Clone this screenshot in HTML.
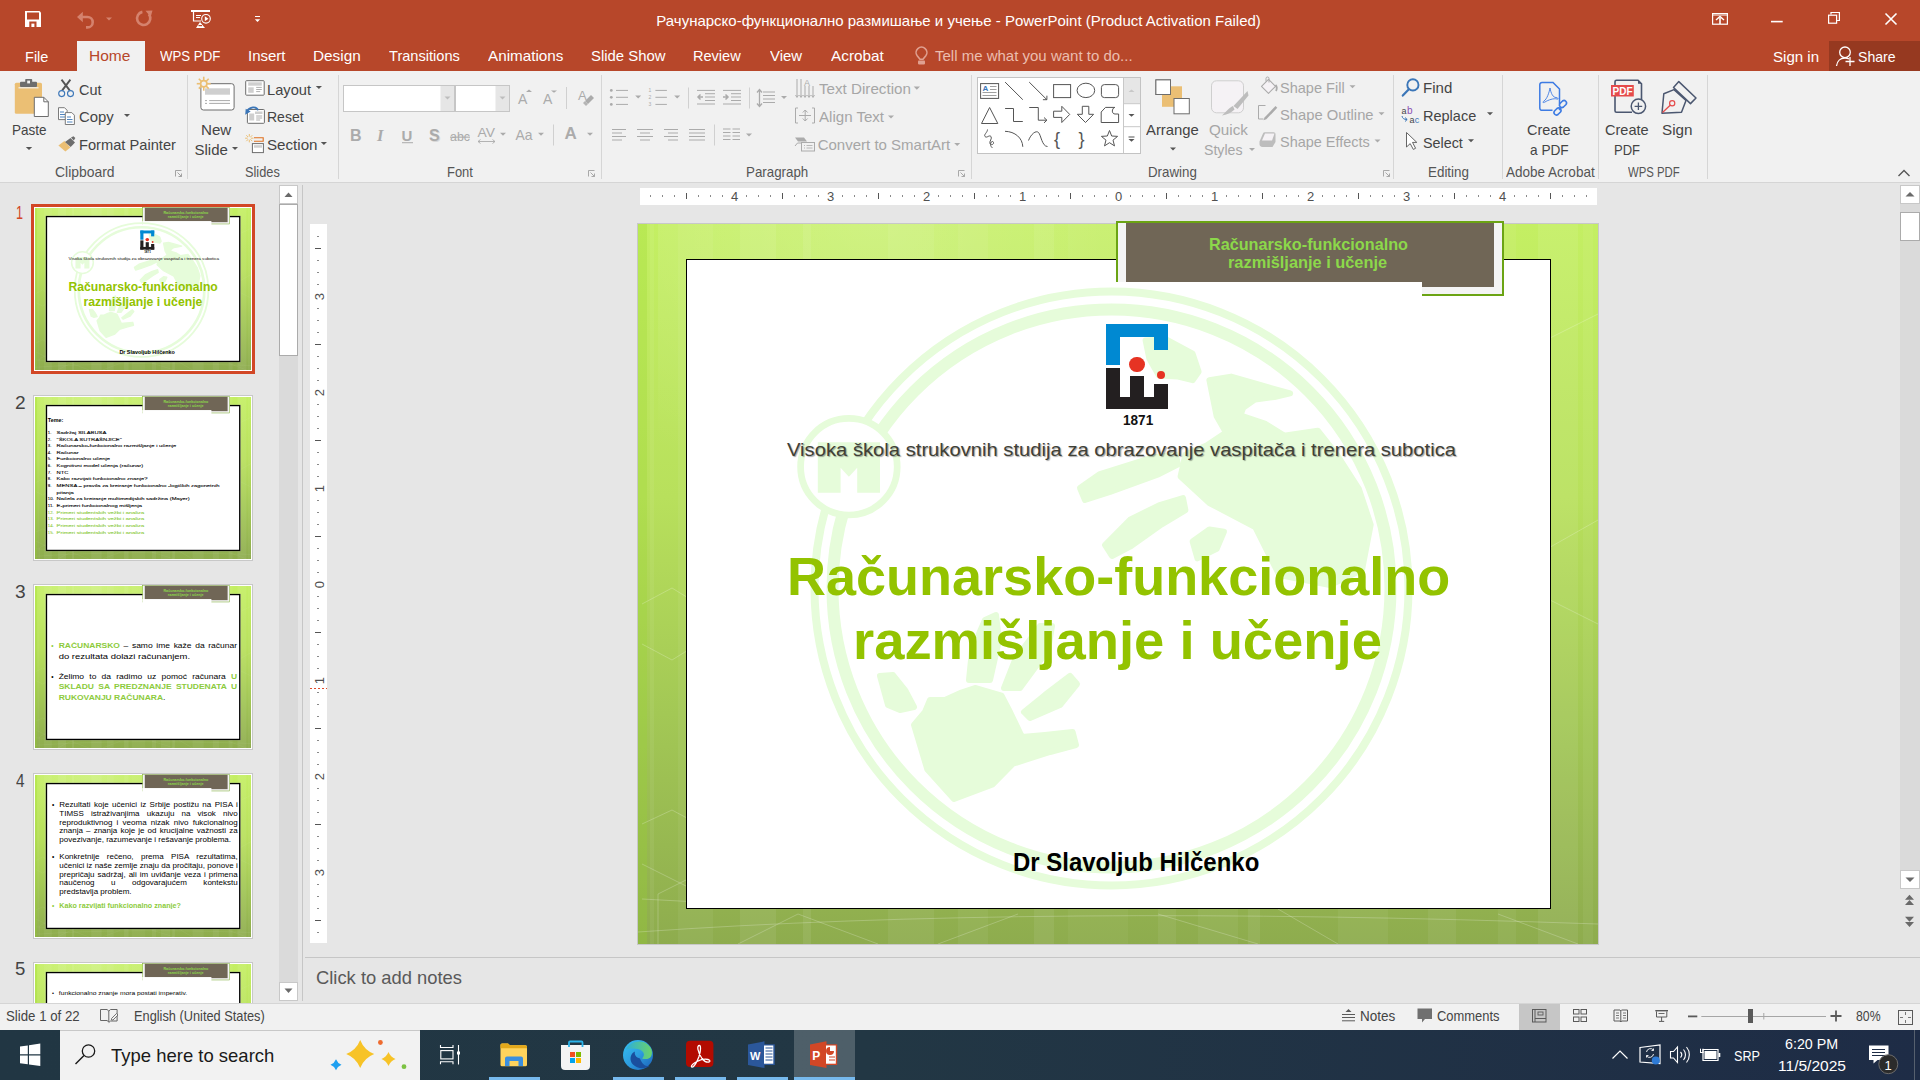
<!DOCTYPE html><html><head><meta charset="utf-8"><style>
*{margin:0;padding:0}
html,body{width:1920px;height:1080px;overflow:hidden;background:#E6E6E6;font-family:"Liberation Sans", sans-serif}
.t{position:absolute;white-space:pre;transform-origin:0 0;font-family:"Liberation Sans", sans-serif}
.slide{position:absolute;width:960px;height:720px;overflow:visible}
.sbg{position:absolute;left:0;top:0;width:960px;height:720px;background:linear-gradient(180deg,#C4EF63 0%,#B8E05C 38%,#A3C855 68%,#8EAC4E 100%)}
.sinner{position:absolute;left:48px;top:35px;width:865px;height:650px;box-sizing:border-box;border:1px solid #000;background:#fff;overflow:hidden}
</style></head><body><div style="position:absolute;left:0px;top:0px;width:1920px;height:71px;background:#B7472A;"></div><div style="position:absolute;left:77px;top:41px;width:68px;height:30px;background:#F1F1F1;"></div><div style="position:absolute;left:1829px;top:41px;width:91px;height:30px;background:#963920;"></div><div style="position:absolute;left:0px;top:71px;width:1920px;height:111px;background:#F1F1F1;"></div><div style="position:absolute;left:0px;top:182px;width:1920px;height:1px;background:#D5D5D5;"></div><div style="position:absolute;left:187px;top:75px;width:1px;height:104px;background:#D6D6D6;"></div><div style="position:absolute;left:338px;top:75px;width:1px;height:104px;background:#D6D6D6;"></div><div style="position:absolute;left:601px;top:75px;width:1px;height:104px;background:#D6D6D6;"></div><div style="position:absolute;left:971px;top:75px;width:1px;height:104px;background:#D6D6D6;"></div><div style="position:absolute;left:1393px;top:75px;width:1px;height:104px;background:#D6D6D6;"></div><div style="position:absolute;left:1502px;top:75px;width:1px;height:104px;background:#D6D6D6;"></div><div style="position:absolute;left:1598px;top:75px;width:1px;height:104px;background:#D6D6D6;"></div><div style="position:absolute;left:1707px;top:75px;width:1px;height:104px;background:#D6D6D6;"></div><div style="position:absolute;left:0;top:183px;width:278px;height:820px;overflow:hidden"><div style="position:absolute;left:31px;top:21px;width:224px;height:170px;background:#D24726;"></div><div style="position:absolute;left:34px;top:24px;width:218px;height:164px;background:#FFFFFF;"></div><div style="position:absolute;left:35px;top:25px;transform:scale(0.225);transform-origin:0 0"><div class="slide">
<div class="sbg"></div>
<div style="position:absolute;left:12px;top:0;width:4px;height:720px;background:rgba(255,255,255,0.06)"></div><div style="position:absolute;left:40px;top:0;width:35px;height:720px;background:rgba(255,255,255,0.05)"></div><div style="position:absolute;left:102px;top:0;width:36px;height:720px;background:rgba(255,255,255,0.07)"></div><div style="position:absolute;left:165px;top:0;width:8px;height:720px;background:rgba(255,255,255,0.08)"></div><div style="position:absolute;left:250px;top:0;width:46px;height:720px;background:rgba(255,255,255,0.06)"></div><div style="position:absolute;left:320px;top:0;width:30px;height:720px;background:rgba(255,255,255,0.05)"></div><div style="position:absolute;left:396px;top:0;width:20px;height:720px;background:rgba(255,255,255,0.07)"></div><div style="position:absolute;left:430px;top:0;width:60px;height:720px;background:rgba(255,255,255,0.04)"></div><div style="position:absolute;left:520px;top:0;width:18px;height:720px;background:rgba(255,255,255,0.06)"></div><div style="position:absolute;left:560px;top:0;width:40px;height:720px;background:rgba(255,255,255,0.05)"></div><div style="position:absolute;left:610px;top:0;width:12px;height:720px;background:rgba(255,255,255,0.07)"></div><div style="position:absolute;left:700px;top:0;width:50px;height:720px;background:rgba(255,255,255,0.05)"></div><div style="position:absolute;left:790px;top:0;width:28px;height:720px;background:rgba(255,255,255,0.06)"></div><div style="position:absolute;left:860px;top:0;width:18px;height:720px;background:rgba(255,255,255,0.05)"></div><div style="position:absolute;left:900px;top:0;width:40px;height:720px;background:rgba(255,255,255,0.07)"></div><div style="position:absolute;left:945px;top:0;width:10px;height:720px;background:rgba(255,255,255,0.05)"></div><div style="position:absolute;left:0;top:0;width:9px;height:720px;background:rgba(150,215,40,0.25)"></div><div style="position:absolute;left:20px;top:0;width:640px;height:300px;background:radial-gradient(ellipse 360px 280px at 220px 0px, rgba(255,255,255,0.2), rgba(255,255,255,0) 100%)"></div><svg width="960" height="720" style="position:absolute;left:0;top:0"><g fill="none" stroke="rgba(255,255,255,0.22)" stroke-width="1">
<path d="M4,380 L34,364 L60,380 L60,420 L34,436 L4,420"/><path d="M4,600 L34,586 L60,600"/><path d="M4,640 L60,668"/><path d="M4,675 L60,678"/>
<path d="M20,720 L20,670 L60,650"/><path d="M100,720 L160,690 L240,720"/><path d="M300,720 L380,690"/><path d="M520,690 L620,720"/>
<path d="M0,708 Q400,680 960,700"/><path d="M640,685 L700,720"/><path d="M860,690 L940,720"/><path d="M900,120 L960,90"/><path d="M900,330 L960,296 M900,370 L960,400"/>
</g></svg>
<div class="sinner" style="border-width:6px"></div>
<div style="position:absolute;left:478px;top:-3px;width:388px;height:75px;box-sizing:border-box;border:2px solid #6BA414;background:#F4F4F4"></div><div style="position:absolute;left:488px;top:-1px;width:368px;height:64px;background:#706656"></div><div style="position:absolute;left:477px;top:58px;width:307px;height:18px;background:#FFFFFF"></div>
<div style="position:absolute;left:49px;top:36px;width:863px;height:648px;overflow:hidden"><div style="position:absolute;left:-49px;top:-36px;width:960px;height:720px"><svg width="960" height="720" style="position:absolute;left:0;top:0" viewBox="0 0 960 720">
<g fill="#E6FCDA" stroke="#E6FCDA" stroke-width="6" stroke-linejoin="round"><path d="M276.0,501.0 L287.0,488.0 L292.0,476.0 L307.0,476.0 L323.5,468.6 L337.0,464.0 L363.5,471.6 L372.0,488.0 L384.0,513.0 L407.0,511.0 L434.6,508.0 L438.0,521.0 L412.0,528.0 L375.0,539.7 L354.6,560.4 L316.0,575.0 L289.4,545.6 Z"/><path d="M242.0,452.0 L255.0,451.0 L267.0,466.0 L276.0,483.0 L262.0,486.0 L250.0,481.0 Z"/><path d="M331.0,456.0 L334.0,426.0 L347.0,396.0 L358.0,391.0 L361.0,416.0 L352.0,456.0 Z"/><path d="M366.0,464.0 L377.0,436.0 L402.0,402.0 L414.0,402.0 L410.0,426.0 L382.0,464.0 Z"/><path d="M386.0,488.0 L407.0,471.0 L432.0,452.0 L439.0,460.0 L422.0,481.0 L392.0,494.0 Z"/><path d="M507.6,116.5 L528.1,115.3 L554.6,129.7 L560.6,147.8 L554.6,156.2 L540.1,152.6 L520.9,151.4 L511.3,134.5 Z"/><path d="M571.4,156.2 L593.1,152.6 L622.0,161.0 L652.1,169.4 L636.4,173.0 L617.2,175.4 L605.1,183.9 L600.3,197.1 L588.3,209.1 L578.7,192.3 L573.8,168.2 Z"/><path d="M590.7,206.7 L605.1,192.3 L626.8,199.5 L646.1,211.6 L679.8,206.7 L699.0,230.8 L720.7,264.5 L732.7,300.6 L724.0,346.0 L692.0,361.0 L641.3,351.0 L617.2,303.0 L571.4,279.0 L542.6,252.5 L547.4,230.8 L569.0,221.2 Z"/><path d="M442.0,264.0 L462.0,250.0 L516.1,233.2 L537.7,230.8 L540.1,240.4 L520.9,250.1 L472.0,268.0 L447.0,276.0 Z"/><path d="M467.0,321.0 L492.0,295.8 L520.9,281.4 L545.0,274.1 L547.4,286.2 L523.3,300.6 L492.0,322.7 L474.0,332.0 Z"/><path d="M554.6,317.5 L571.4,305.4 L585.9,307.8 L578.7,324.7 L559.4,334.3 Z"/></g>
<g fill="none" stroke="#E6FCDA">
<circle cx="473.5" cy="364.5" r="297" stroke-width="8"/>
<circle cx="473.5" cy="364.5" r="279" stroke-width="12"/>
</g>
<circle cx="210.89999999999998" cy="242.7" r="48.3" fill="#FFFFFF" stroke="#E6FCDA" stroke-width="6.7"/>
<path fill="#E6FCDA" d="M179.79999999999995,218.2 H242 V268.8 H219.20000000000005 V243.8 L210.89999999999998,252.7 L202.60000000000002,243.8 V268.8 H179.79999999999995 Z"/>
</svg></div></div>
<div style="position:absolute;left:468px;top:100px;width:62px;height:13px;background:#0089D2"></div><div style="position:absolute;left:468px;top:100px;width:14px;height:41px;background:#0089D2"></div><div style="position:absolute;left:516px;top:100px;width:14px;height:26px;background:#0089D2"></div><div style="position:absolute;left:468px;top:144px;width:14px;height:41px;background:#231F20"></div><div style="position:absolute;left:468px;top:173px;width:62px;height:12px;background:#231F20"></div><div style="position:absolute;left:492px;top:152px;width:14px;height:33px;background:#231F20"></div><div style="position:absolute;left:516px;top:160px;width:14px;height:25px;background:#231F20"></div><div style="position:absolute;left:491.29999999999995px;top:132.5px;width:15.4px;height:15.4px;border-radius:50%;background:#E63323"></div><div style="position:absolute;left:519px;top:147.3px;width:8px;height:8px;border-radius:50%;background:#E63323"></div>
<div class="t" style="left:570.75px;top:12.00px;font-size:17px;line-height:17px;font-weight:700;color:#8CD84A;transform:scaleX(0.9531);">Računarsko-funkcionalno</div>
<div class="t" style="left:590.04px;top:30.40px;font-size:17px;line-height:17px;font-weight:700;color:#8CD84A;transform:scaleX(0.9622);">razmišljanje i učenje</div>
<div class="t" style="left:149.00px;top:215.80px;font-size:19px;line-height:19px;font-weight:400;color:#404036;transform:scaleX(1.0634);text-shadow:1px 1px 1px rgba(0,0,0,0.35);">Visoka škola strukovnih studija za obrazovanje vaspitača i trenera subotica</div>
<div class="t" style="left:148.64px;top:325.80px;font-size:53px;line-height:53px;font-weight:700;color:#93C300;transform:scaleX(1.0190);">Računarsko-funkcionalno</div>
<div class="t" style="left:214.62px;top:389.60px;font-size:53px;line-height:53px;font-weight:700;color:#93C300;transform:scaleX(1.0260);">razmišljanje i učenje</div>
<div class="t" style="left:375.08px;top:625.50px;font-size:25px;line-height:25px;font-weight:700;color:#000000;transform:scaleX(0.9583);">Dr Slavoljub Hilčenko</div>
<div class="t" style="left:485.09px;top:188.00px;font-size:15px;line-height:15px;font-weight:700;color:#111111;transform:scaleX(0.9062);">1871</div>

</div></div><div style="position:absolute;left:33px;top:212px;width:220px;height:166px;background:#C8C8C8;"></div><div style="position:absolute;left:34px;top:213px;width:218px;height:164px;background:#FFFFFF;"></div><div style="position:absolute;left:35px;top:214px;transform:scale(0.225);transform-origin:0 0"><div class="slide">
<div class="sbg"></div>
<div style="position:absolute;left:12px;top:0;width:4px;height:720px;background:rgba(255,255,255,0.06)"></div><div style="position:absolute;left:40px;top:0;width:35px;height:720px;background:rgba(255,255,255,0.05)"></div><div style="position:absolute;left:102px;top:0;width:36px;height:720px;background:rgba(255,255,255,0.07)"></div><div style="position:absolute;left:165px;top:0;width:8px;height:720px;background:rgba(255,255,255,0.08)"></div><div style="position:absolute;left:250px;top:0;width:46px;height:720px;background:rgba(255,255,255,0.06)"></div><div style="position:absolute;left:320px;top:0;width:30px;height:720px;background:rgba(255,255,255,0.05)"></div><div style="position:absolute;left:396px;top:0;width:20px;height:720px;background:rgba(255,255,255,0.07)"></div><div style="position:absolute;left:430px;top:0;width:60px;height:720px;background:rgba(255,255,255,0.04)"></div><div style="position:absolute;left:520px;top:0;width:18px;height:720px;background:rgba(255,255,255,0.06)"></div><div style="position:absolute;left:560px;top:0;width:40px;height:720px;background:rgba(255,255,255,0.05)"></div><div style="position:absolute;left:610px;top:0;width:12px;height:720px;background:rgba(255,255,255,0.07)"></div><div style="position:absolute;left:700px;top:0;width:50px;height:720px;background:rgba(255,255,255,0.05)"></div><div style="position:absolute;left:790px;top:0;width:28px;height:720px;background:rgba(255,255,255,0.06)"></div><div style="position:absolute;left:860px;top:0;width:18px;height:720px;background:rgba(255,255,255,0.05)"></div><div style="position:absolute;left:900px;top:0;width:40px;height:720px;background:rgba(255,255,255,0.07)"></div><div style="position:absolute;left:945px;top:0;width:10px;height:720px;background:rgba(255,255,255,0.05)"></div><div style="position:absolute;left:0;top:0;width:9px;height:720px;background:rgba(150,215,40,0.25)"></div><div style="position:absolute;left:20px;top:0;width:640px;height:300px;background:radial-gradient(ellipse 360px 280px at 220px 0px, rgba(255,255,255,0.2), rgba(255,255,255,0) 100%)"></div><svg width="960" height="720" style="position:absolute;left:0;top:0"><g fill="none" stroke="rgba(255,255,255,0.22)" stroke-width="1">
<path d="M4,380 L34,364 L60,380 L60,420 L34,436 L4,420"/><path d="M4,600 L34,586 L60,600"/><path d="M4,640 L60,668"/><path d="M4,675 L60,678"/>
<path d="M20,720 L20,670 L60,650"/><path d="M100,720 L160,690 L240,720"/><path d="M300,720 L380,690"/><path d="M520,690 L620,720"/>
<path d="M0,708 Q400,680 960,700"/><path d="M640,685 L700,720"/><path d="M860,690 L940,720"/><path d="M900,120 L960,90"/><path d="M900,330 L960,296 M900,370 L960,400"/>
</g></svg>
<div class="sinner" style="border-width:6px"></div>
<div style="position:absolute;left:478px;top:-3px;width:388px;height:75px;box-sizing:border-box;border:2px solid #6BA414;background:#F4F4F4"></div><div style="position:absolute;left:488px;top:-1px;width:368px;height:64px;background:#706656"></div><div style="position:absolute;left:477px;top:58px;width:307px;height:18px;background:#FFFFFF"></div>


<div class="t" style="left:570.75px;top:12.00px;font-size:17px;line-height:17px;font-weight:700;color:#8CD84A;transform:scaleX(0.9531);">Računarsko-funkcionalno</div><div class="t" style="left:590.04px;top:30.40px;font-size:17px;line-height:17px;font-weight:700;color:#8CD84A;transform:scaleX(0.9622);">razmišljanje i učenje</div>
<div class="t" style="left:57px;top:93.6px;font-size:20px;line-height:20px;color:#000;font-weight:700;transform:scaleX(1.2);">Teme:</div><div class="t" style="left:57px;top:148.2px;font-size:19px;line-height:19px;color:#000;font-weight:400;-webkit-text-stroke:0.4px #000;">1.</div><div class="t" style="left:96px;top:148.2px;font-size:19px;line-height:19px;color:#000;font-weight:400;transform:scaleX(1.36);-webkit-text-stroke:0.4px #000;">Sadržaj SILABUSA</div><div class="t" style="left:57px;top:177.7px;font-size:19px;line-height:19px;color:#000;font-weight:400;-webkit-text-stroke:0.4px #000;">2.</div><div class="t" style="left:96px;top:177.7px;font-size:19px;line-height:19px;color:#000;font-weight:400;transform:scaleX(1.36);-webkit-text-stroke:0.4px #000;">"ŠKOLA SUTRAŠNJICE"</div><div class="t" style="left:57px;top:207.2px;font-size:19px;line-height:19px;color:#000;font-weight:400;-webkit-text-stroke:0.4px #000;">3.</div><div class="t" style="left:96px;top:207.2px;font-size:19px;line-height:19px;color:#000;font-weight:400;transform:scaleX(1.36);-webkit-text-stroke:0.4px #000;">Računarsko-funkcionalno razmišljanje i učenje</div><div class="t" style="left:57px;top:236.7px;font-size:19px;line-height:19px;color:#000;font-weight:400;-webkit-text-stroke:0.4px #000;">4.</div><div class="t" style="left:96px;top:236.7px;font-size:19px;line-height:19px;color:#000;font-weight:400;transform:scaleX(1.36);-webkit-text-stroke:0.4px #000;">Računar</div><div class="t" style="left:57px;top:266.2px;font-size:19px;line-height:19px;color:#000;font-weight:400;-webkit-text-stroke:0.4px #000;">5.</div><div class="t" style="left:96px;top:266.2px;font-size:19px;line-height:19px;color:#000;font-weight:400;transform:scaleX(1.36);-webkit-text-stroke:0.4px #000;">Funkcionalno učenje</div><div class="t" style="left:57px;top:295.7px;font-size:19px;line-height:19px;color:#000;font-weight:400;-webkit-text-stroke:0.4px #000;">6.</div><div class="t" style="left:96px;top:295.7px;font-size:19px;line-height:19px;color:#000;font-weight:400;transform:scaleX(1.36);-webkit-text-stroke:0.4px #000;">Kognitivni model učenja (računar)</div><div class="t" style="left:57px;top:325.2px;font-size:19px;line-height:19px;color:#000;font-weight:400;-webkit-text-stroke:0.4px #000;">7.</div><div class="t" style="left:96px;top:325.2px;font-size:19px;line-height:19px;color:#000;font-weight:400;transform:scaleX(1.36);-webkit-text-stroke:0.4px #000;">NTC</div><div class="t" style="left:57px;top:354.7px;font-size:19px;line-height:19px;color:#000;font-weight:400;-webkit-text-stroke:0.4px #000;">8.</div><div class="t" style="left:96px;top:354.7px;font-size:19px;line-height:19px;color:#000;font-weight:400;transform:scaleX(1.36);-webkit-text-stroke:0.4px #000;">Kako razvijati funkcionalno znanje?</div><div class="t" style="left:57px;top:384.2px;font-size:19px;line-height:19px;color:#000;font-weight:400;-webkit-text-stroke:0.4px #000;">9.</div><div class="t" style="left:96px;top:384.2px;font-size:19px;line-height:19px;color:#000;font-weight:400;transform:scaleX(1.36);-webkit-text-stroke:0.4px #000;">MENSA – pravila za kreiranje funkcionalno -logičkih zagonetnih</div><div class="t" style="left:96px;top:413.7px;font-size:19px;line-height:19px;color:#000;font-weight:400;transform:scaleX(1.36);-webkit-text-stroke:0.4px #000;">pitanja</div><div class="t" style="left:57px;top:443.2px;font-size:19px;line-height:19px;color:#000;font-weight:400;-webkit-text-stroke:0.4px #000;">10.</div><div class="t" style="left:96px;top:443.2px;font-size:19px;line-height:19px;color:#000;font-weight:400;transform:scaleX(1.36);-webkit-text-stroke:0.4px #000;">Načela za kreiranje multimedijskih sadržina (Mayer)</div><div class="t" style="left:57px;top:472.7px;font-size:19px;line-height:19px;color:#000;font-weight:400;-webkit-text-stroke:0.4px #000;">11.</div><div class="t" style="left:96px;top:472.7px;font-size:19px;line-height:19px;color:#000;font-weight:400;transform:scaleX(1.36);-webkit-text-stroke:0.4px #000;">E-primeri funkcionalnog mišljenja</div><div class="t" style="left:57px;top:502.2px;font-size:19px;line-height:19px;color:#8CCB3C;font-weight:400;-webkit-text-stroke:0.4px #8CCB3C;">12.</div><div class="t" style="left:96px;top:502.2px;font-size:19px;line-height:19px;color:#8CCB3C;font-weight:400;transform:scaleX(1.36);-webkit-text-stroke:0.4px #8CCB3C;">Primeri studentskih vežbi i analiza</div><div class="t" style="left:57px;top:531.7px;font-size:19px;line-height:19px;color:#8CCB3C;font-weight:400;-webkit-text-stroke:0.4px #8CCB3C;">13.</div><div class="t" style="left:96px;top:531.7px;font-size:19px;line-height:19px;color:#8CCB3C;font-weight:400;transform:scaleX(1.36);-webkit-text-stroke:0.4px #8CCB3C;">Primeri studentskih vežbi i analiza</div><div class="t" style="left:57px;top:561.2px;font-size:19px;line-height:19px;color:#8CCB3C;font-weight:400;-webkit-text-stroke:0.4px #8CCB3C;">14.</div><div class="t" style="left:96px;top:561.2px;font-size:19px;line-height:19px;color:#8CCB3C;font-weight:400;transform:scaleX(1.36);-webkit-text-stroke:0.4px #8CCB3C;">Primeri studentskih vežbi i analiza</div><div class="t" style="left:57px;top:590.7px;font-size:19px;line-height:19px;color:#8CCB3C;font-weight:400;-webkit-text-stroke:0.4px #8CCB3C;">15.</div><div class="t" style="left:96px;top:590.7px;font-size:19px;line-height:19px;color:#8CCB3C;font-weight:400;transform:scaleX(1.36);-webkit-text-stroke:0.4px #8CCB3C;">Primeri studentskih vežbi i analiza</div>
</div></div><div style="position:absolute;left:33px;top:401px;width:220px;height:166px;background:#C8C8C8;"></div><div style="position:absolute;left:34px;top:402px;width:218px;height:164px;background:#FFFFFF;"></div><div style="position:absolute;left:35px;top:403px;transform:scale(0.225);transform-origin:0 0"><div class="slide">
<div class="sbg"></div>
<div style="position:absolute;left:12px;top:0;width:4px;height:720px;background:rgba(255,255,255,0.06)"></div><div style="position:absolute;left:40px;top:0;width:35px;height:720px;background:rgba(255,255,255,0.05)"></div><div style="position:absolute;left:102px;top:0;width:36px;height:720px;background:rgba(255,255,255,0.07)"></div><div style="position:absolute;left:165px;top:0;width:8px;height:720px;background:rgba(255,255,255,0.08)"></div><div style="position:absolute;left:250px;top:0;width:46px;height:720px;background:rgba(255,255,255,0.06)"></div><div style="position:absolute;left:320px;top:0;width:30px;height:720px;background:rgba(255,255,255,0.05)"></div><div style="position:absolute;left:396px;top:0;width:20px;height:720px;background:rgba(255,255,255,0.07)"></div><div style="position:absolute;left:430px;top:0;width:60px;height:720px;background:rgba(255,255,255,0.04)"></div><div style="position:absolute;left:520px;top:0;width:18px;height:720px;background:rgba(255,255,255,0.06)"></div><div style="position:absolute;left:560px;top:0;width:40px;height:720px;background:rgba(255,255,255,0.05)"></div><div style="position:absolute;left:610px;top:0;width:12px;height:720px;background:rgba(255,255,255,0.07)"></div><div style="position:absolute;left:700px;top:0;width:50px;height:720px;background:rgba(255,255,255,0.05)"></div><div style="position:absolute;left:790px;top:0;width:28px;height:720px;background:rgba(255,255,255,0.06)"></div><div style="position:absolute;left:860px;top:0;width:18px;height:720px;background:rgba(255,255,255,0.05)"></div><div style="position:absolute;left:900px;top:0;width:40px;height:720px;background:rgba(255,255,255,0.07)"></div><div style="position:absolute;left:945px;top:0;width:10px;height:720px;background:rgba(255,255,255,0.05)"></div><div style="position:absolute;left:0;top:0;width:9px;height:720px;background:rgba(150,215,40,0.25)"></div><div style="position:absolute;left:20px;top:0;width:640px;height:300px;background:radial-gradient(ellipse 360px 280px at 220px 0px, rgba(255,255,255,0.2), rgba(255,255,255,0) 100%)"></div><svg width="960" height="720" style="position:absolute;left:0;top:0"><g fill="none" stroke="rgba(255,255,255,0.22)" stroke-width="1">
<path d="M4,380 L34,364 L60,380 L60,420 L34,436 L4,420"/><path d="M4,600 L34,586 L60,600"/><path d="M4,640 L60,668"/><path d="M4,675 L60,678"/>
<path d="M20,720 L20,670 L60,650"/><path d="M100,720 L160,690 L240,720"/><path d="M300,720 L380,690"/><path d="M520,690 L620,720"/>
<path d="M0,708 Q400,680 960,700"/><path d="M640,685 L700,720"/><path d="M860,690 L940,720"/><path d="M900,120 L960,90"/><path d="M900,330 L960,296 M900,370 L960,400"/>
</g></svg>
<div class="sinner" style="border-width:6px"></div>
<div style="position:absolute;left:478px;top:-3px;width:388px;height:75px;box-sizing:border-box;border:2px solid #6BA414;background:#F4F4F4"></div><div style="position:absolute;left:488px;top:-1px;width:368px;height:64px;background:#706656"></div><div style="position:absolute;left:477px;top:58px;width:307px;height:18px;background:#FFFFFF"></div>


<div class="t" style="left:570.75px;top:12.00px;font-size:17px;line-height:17px;font-weight:700;color:#8CD84A;transform:scaleX(0.9531);">Računarsko-funkcionalno</div><div class="t" style="left:590.04px;top:30.40px;font-size:17px;line-height:17px;font-weight:700;color:#8CD84A;transform:scaleX(0.9622);">razmišljanje i učenje</div>
<div class="t" style="left:72px;top:252.0px;font-size:29px;line-height:29px;color:#8CCB3C;font-weight:400;">•</div><div class="t" style="left:105px;top:252.0px;font-size:29px;line-height:29px;color:#000;font-weight:400;width:610.0px;white-space:nowrap;text-align:justify;text-align-last:justify;transform:scaleX(1.3);"><span style="color:#8CCB3C;font-weight:700">RAČUNARSKO</span> – samo ime kaže da računar</div><div class="t" style="left:105px;top:301.0px;font-size:29px;line-height:29px;color:#000;font-weight:400;transform:scaleX(1.45);">do rezultata dolazi računanjem.</div><div class="t" style="left:72px;top:389.0px;font-size:29px;line-height:29px;color:#000;font-weight:400;">•</div><div class="t" style="left:105px;top:389.0px;font-size:29px;line-height:29px;color:#000;font-weight:400;width:610.0px;white-space:nowrap;text-align:justify;text-align-last:justify;transform:scaleX(1.3);">Želimo to da radimo uz pomoć računara <span style="color:#8CCB3C;font-weight:700">U</span></div><div class="t" style="left:105px;top:432.0px;font-size:29px;line-height:29px;color:#000;font-weight:400;width:610.0px;white-space:nowrap;text-align:justify;text-align-last:justify;transform:scaleX(1.3);"><span style="color:#8CCB3C;font-weight:700">SKLADU SA PREDZNANJE STUDENATA U</span></div><div class="t" style="left:105px;top:481.0px;font-size:29px;line-height:29px;color:#000;font-weight:400;transform:scaleX(1.3);"><span style="color:#8CCB3C;font-weight:700">RUKOVANJU RAČUNARA</span>.</div>
</div></div><div style="position:absolute;left:33px;top:590px;width:220px;height:166px;background:#C8C8C8;"></div><div style="position:absolute;left:34px;top:591px;width:218px;height:164px;background:#FFFFFF;"></div><div style="position:absolute;left:35px;top:592px;transform:scale(0.225);transform-origin:0 0"><div class="slide">
<div class="sbg"></div>
<div style="position:absolute;left:12px;top:0;width:4px;height:720px;background:rgba(255,255,255,0.06)"></div><div style="position:absolute;left:40px;top:0;width:35px;height:720px;background:rgba(255,255,255,0.05)"></div><div style="position:absolute;left:102px;top:0;width:36px;height:720px;background:rgba(255,255,255,0.07)"></div><div style="position:absolute;left:165px;top:0;width:8px;height:720px;background:rgba(255,255,255,0.08)"></div><div style="position:absolute;left:250px;top:0;width:46px;height:720px;background:rgba(255,255,255,0.06)"></div><div style="position:absolute;left:320px;top:0;width:30px;height:720px;background:rgba(255,255,255,0.05)"></div><div style="position:absolute;left:396px;top:0;width:20px;height:720px;background:rgba(255,255,255,0.07)"></div><div style="position:absolute;left:430px;top:0;width:60px;height:720px;background:rgba(255,255,255,0.04)"></div><div style="position:absolute;left:520px;top:0;width:18px;height:720px;background:rgba(255,255,255,0.06)"></div><div style="position:absolute;left:560px;top:0;width:40px;height:720px;background:rgba(255,255,255,0.05)"></div><div style="position:absolute;left:610px;top:0;width:12px;height:720px;background:rgba(255,255,255,0.07)"></div><div style="position:absolute;left:700px;top:0;width:50px;height:720px;background:rgba(255,255,255,0.05)"></div><div style="position:absolute;left:790px;top:0;width:28px;height:720px;background:rgba(255,255,255,0.06)"></div><div style="position:absolute;left:860px;top:0;width:18px;height:720px;background:rgba(255,255,255,0.05)"></div><div style="position:absolute;left:900px;top:0;width:40px;height:720px;background:rgba(255,255,255,0.07)"></div><div style="position:absolute;left:945px;top:0;width:10px;height:720px;background:rgba(255,255,255,0.05)"></div><div style="position:absolute;left:0;top:0;width:9px;height:720px;background:rgba(150,215,40,0.25)"></div><div style="position:absolute;left:20px;top:0;width:640px;height:300px;background:radial-gradient(ellipse 360px 280px at 220px 0px, rgba(255,255,255,0.2), rgba(255,255,255,0) 100%)"></div><svg width="960" height="720" style="position:absolute;left:0;top:0"><g fill="none" stroke="rgba(255,255,255,0.22)" stroke-width="1">
<path d="M4,380 L34,364 L60,380 L60,420 L34,436 L4,420"/><path d="M4,600 L34,586 L60,600"/><path d="M4,640 L60,668"/><path d="M4,675 L60,678"/>
<path d="M20,720 L20,670 L60,650"/><path d="M100,720 L160,690 L240,720"/><path d="M300,720 L380,690"/><path d="M520,690 L620,720"/>
<path d="M0,708 Q400,680 960,700"/><path d="M640,685 L700,720"/><path d="M860,690 L940,720"/><path d="M900,120 L960,90"/><path d="M900,330 L960,296 M900,370 L960,400"/>
</g></svg>
<div class="sinner" style="border-width:6px"></div>
<div style="position:absolute;left:478px;top:-3px;width:388px;height:75px;box-sizing:border-box;border:2px solid #6BA414;background:#F4F4F4"></div><div style="position:absolute;left:488px;top:-1px;width:368px;height:64px;background:#706656"></div><div style="position:absolute;left:477px;top:58px;width:307px;height:18px;background:#FFFFFF"></div>


<div class="t" style="left:570.75px;top:12.00px;font-size:17px;line-height:17px;font-weight:700;color:#8CD84A;transform:scaleX(0.9531);">Računarsko-funkcionalno</div><div class="t" style="left:590.04px;top:30.40px;font-size:17px;line-height:17px;font-weight:700;color:#8CD84A;transform:scaleX(0.9622);">razmišljanje i učenje</div>
<div class="t" style="left:75px;top:119.0px;font-size:29px;line-height:29px;color:#000;font-weight:400;">•</div><div class="t" style="left:107.5px;top:119.0px;font-size:29px;line-height:29px;color:#000;font-weight:400;width:644.7154471544716px;white-space:nowrap;text-align:justify;text-align-last:justify;transform:scaleX(1.23);">Rezultati koje učenici iz Srbije postižu na PISA i</div><div class="t" style="left:107.5px;top:158.0px;font-size:29px;line-height:29px;color:#000;font-weight:400;width:644.7154471544716px;white-space:nowrap;text-align:justify;text-align-last:justify;transform:scaleX(1.23);">TIMSS istraživanjima ukazuju na visok nivo</div><div class="t" style="left:107.5px;top:196.7px;font-size:29px;line-height:29px;color:#000;font-weight:400;width:644.7154471544716px;white-space:nowrap;text-align:justify;text-align-last:justify;transform:scaleX(1.23);">reproduktivnog i veoma nizak nivo fukcionalnog</div><div class="t" style="left:107.5px;top:235.3px;font-size:29px;line-height:29px;color:#000;font-weight:400;width:644.7154471544716px;white-space:nowrap;text-align:justify;text-align-last:justify;transform:scaleX(1.23);">znanja – znanja koje je od krucijalne važnosti za</div><div class="t" style="left:107.5px;top:274.4px;font-size:29px;line-height:29px;color:#000;font-weight:400;transform:scaleX(1.23);">povezivanje, razumevanje i rešavanje problema.</div><div class="t" style="left:75px;top:350.9px;font-size:29px;line-height:29px;color:#000;font-weight:400;">•</div><div class="t" style="left:107.5px;top:350.9px;font-size:29px;line-height:29px;color:#000;font-weight:400;width:644.7154471544716px;white-space:nowrap;text-align:justify;text-align-last:justify;transform:scaleX(1.23);">Konkretnije rečeno, prema PISA rezultatima,</div><div class="t" style="left:107.5px;top:390.4px;font-size:29px;line-height:29px;color:#000;font-weight:400;width:644.7154471544716px;white-space:nowrap;text-align:justify;text-align-last:justify;transform:scaleX(1.23);">učenici iz naše zemlje znaju da pročitaju, ponove i</div><div class="t" style="left:107.5px;top:428.2px;font-size:29px;line-height:29px;color:#000;font-weight:400;width:644.7154471544716px;white-space:nowrap;text-align:justify;text-align-last:justify;transform:scaleX(1.23);">prepričaju sadržaj, ali im uviđanje veza i primena</div><div class="t" style="left:107.5px;top:467.3px;font-size:29px;line-height:29px;color:#000;font-weight:400;width:644.7154471544716px;white-space:nowrap;text-align:justify;text-align-last:justify;transform:scaleX(1.23);">naučenog u odgovarajućem kontekstu</div><div class="t" style="left:107.5px;top:506.4px;font-size:29px;line-height:29px;color:#000;font-weight:400;transform:scaleX(1.23);">predstavlja problem.</div><div class="t" style="left:75px;top:565.3px;font-size:29px;line-height:29px;color:#8CCB3C;font-weight:400;">•</div><div class="t" style="left:107.5px;top:565.3px;font-size:29px;line-height:29px;color:#8CCB3C;font-weight:700;transform:scaleX(1.1);">Kako razvijati funkcionalno znanje?</div>
</div></div><div style="position:absolute;left:33px;top:779px;width:220px;height:166px;background:#C8C8C8;"></div><div style="position:absolute;left:34px;top:780px;width:218px;height:164px;background:#FFFFFF;"></div><div style="position:absolute;left:35px;top:781px;transform:scale(0.225);transform-origin:0 0"><div class="slide">
<div class="sbg"></div>
<div style="position:absolute;left:12px;top:0;width:4px;height:720px;background:rgba(255,255,255,0.06)"></div><div style="position:absolute;left:40px;top:0;width:35px;height:720px;background:rgba(255,255,255,0.05)"></div><div style="position:absolute;left:102px;top:0;width:36px;height:720px;background:rgba(255,255,255,0.07)"></div><div style="position:absolute;left:165px;top:0;width:8px;height:720px;background:rgba(255,255,255,0.08)"></div><div style="position:absolute;left:250px;top:0;width:46px;height:720px;background:rgba(255,255,255,0.06)"></div><div style="position:absolute;left:320px;top:0;width:30px;height:720px;background:rgba(255,255,255,0.05)"></div><div style="position:absolute;left:396px;top:0;width:20px;height:720px;background:rgba(255,255,255,0.07)"></div><div style="position:absolute;left:430px;top:0;width:60px;height:720px;background:rgba(255,255,255,0.04)"></div><div style="position:absolute;left:520px;top:0;width:18px;height:720px;background:rgba(255,255,255,0.06)"></div><div style="position:absolute;left:560px;top:0;width:40px;height:720px;background:rgba(255,255,255,0.05)"></div><div style="position:absolute;left:610px;top:0;width:12px;height:720px;background:rgba(255,255,255,0.07)"></div><div style="position:absolute;left:700px;top:0;width:50px;height:720px;background:rgba(255,255,255,0.05)"></div><div style="position:absolute;left:790px;top:0;width:28px;height:720px;background:rgba(255,255,255,0.06)"></div><div style="position:absolute;left:860px;top:0;width:18px;height:720px;background:rgba(255,255,255,0.05)"></div><div style="position:absolute;left:900px;top:0;width:40px;height:720px;background:rgba(255,255,255,0.07)"></div><div style="position:absolute;left:945px;top:0;width:10px;height:720px;background:rgba(255,255,255,0.05)"></div><div style="position:absolute;left:0;top:0;width:9px;height:720px;background:rgba(150,215,40,0.25)"></div><div style="position:absolute;left:20px;top:0;width:640px;height:300px;background:radial-gradient(ellipse 360px 280px at 220px 0px, rgba(255,255,255,0.2), rgba(255,255,255,0) 100%)"></div><svg width="960" height="720" style="position:absolute;left:0;top:0"><g fill="none" stroke="rgba(255,255,255,0.22)" stroke-width="1">
<path d="M4,380 L34,364 L60,380 L60,420 L34,436 L4,420"/><path d="M4,600 L34,586 L60,600"/><path d="M4,640 L60,668"/><path d="M4,675 L60,678"/>
<path d="M20,720 L20,670 L60,650"/><path d="M100,720 L160,690 L240,720"/><path d="M300,720 L380,690"/><path d="M520,690 L620,720"/>
<path d="M0,708 Q400,680 960,700"/><path d="M640,685 L700,720"/><path d="M860,690 L940,720"/><path d="M900,120 L960,90"/><path d="M900,330 L960,296 M900,370 L960,400"/>
</g></svg>
<div class="sinner" style="border-width:6px"></div>
<div style="position:absolute;left:478px;top:-3px;width:388px;height:75px;box-sizing:border-box;border:2px solid #6BA414;background:#F4F4F4"></div><div style="position:absolute;left:488px;top:-1px;width:368px;height:64px;background:#706656"></div><div style="position:absolute;left:477px;top:58px;width:307px;height:18px;background:#FFFFFF"></div>


<div class="t" style="left:570.75px;top:12.00px;font-size:17px;line-height:17px;font-weight:700;color:#8CD84A;transform:scaleX(0.9531);">Računarsko-funkcionalno</div><div class="t" style="left:590.04px;top:30.40px;font-size:17px;line-height:17px;font-weight:700;color:#8CD84A;transform:scaleX(0.9622);">razmišljanje i učenje</div>
<div class="t" style="left:75.5px;top:116.5px;font-size:25px;line-height:25px;color:#000;font-weight:400;">•</div><div class="t" style="left:105.5px;top:116.5px;font-size:25px;line-height:25px;color:#000;font-weight:400;transform:scaleX(1.19);">funkcionalno znanje mora postati imperativ.</div>
</div></div></div><div style="position:absolute;left:279px;top:185px;width:19px;height:816px;background:#DADADA;"></div><div style="position:absolute;left:279px;top:185px;width:19px;height:19px;background:#FFFFFF;box-sizing:border-box;border:1px solid #C8C8C8"></div><div style="position:absolute;left:279px;top:204px;width:19px;height:152px;background:#FFFFFF;box-sizing:border-box;border:1px solid #ABABAB"></div><div style="position:absolute;left:279px;top:982px;width:19px;height:19px;background:#FFFFFF;box-sizing:border-box;border:1px solid #C8C8C8"></div><div style="position:absolute;left:302px;top:185px;width:1px;height:816px;background:#C6C6C6;"></div><div style="position:absolute;left:640px;top:188px;width:957px;height:17px;background:#FFFFFF;"></div><div style="position:absolute;left:650px;top:195px;width:1px;height:2px;background:#8A8A8A;"></div><div style="position:absolute;left:662px;top:195px;width:1px;height:2px;background:#8A8A8A;"></div><div style="position:absolute;left:674px;top:195px;width:1px;height:2px;background:#8A8A8A;"></div><div style="position:absolute;left:686px;top:193px;width:1px;height:6px;background:#555;"></div><div style="position:absolute;left:698px;top:195px;width:1px;height:2px;background:#8A8A8A;"></div><div style="position:absolute;left:710px;top:195px;width:1px;height:2px;background:#8A8A8A;"></div><div style="position:absolute;left:722px;top:195px;width:1px;height:2px;background:#8A8A8A;"></div><div class="t" style="left:724.5px;top:190px;width:20px;text-align:center;font-size:13px;line-height:13px;color:#505050">4</div><div style="position:absolute;left:746px;top:195px;width:1px;height:2px;background:#8A8A8A;"></div><div style="position:absolute;left:758px;top:195px;width:1px;height:2px;background:#8A8A8A;"></div><div style="position:absolute;left:770px;top:195px;width:1px;height:2px;background:#8A8A8A;"></div><div style="position:absolute;left:782px;top:193px;width:1px;height:6px;background:#555;"></div><div style="position:absolute;left:794px;top:195px;width:1px;height:2px;background:#8A8A8A;"></div><div style="position:absolute;left:806px;top:195px;width:1px;height:2px;background:#8A8A8A;"></div><div style="position:absolute;left:818px;top:195px;width:1px;height:2px;background:#8A8A8A;"></div><div class="t" style="left:820.5px;top:190px;width:20px;text-align:center;font-size:13px;line-height:13px;color:#505050">3</div><div style="position:absolute;left:842px;top:195px;width:1px;height:2px;background:#8A8A8A;"></div><div style="position:absolute;left:854px;top:195px;width:1px;height:2px;background:#8A8A8A;"></div><div style="position:absolute;left:866px;top:195px;width:1px;height:2px;background:#8A8A8A;"></div><div style="position:absolute;left:878px;top:193px;width:1px;height:6px;background:#555;"></div><div style="position:absolute;left:890px;top:195px;width:1px;height:2px;background:#8A8A8A;"></div><div style="position:absolute;left:902px;top:195px;width:1px;height:2px;background:#8A8A8A;"></div><div style="position:absolute;left:914px;top:195px;width:1px;height:2px;background:#8A8A8A;"></div><div class="t" style="left:916.5px;top:190px;width:20px;text-align:center;font-size:13px;line-height:13px;color:#505050">2</div><div style="position:absolute;left:938px;top:195px;width:1px;height:2px;background:#8A8A8A;"></div><div style="position:absolute;left:950px;top:195px;width:1px;height:2px;background:#8A8A8A;"></div><div style="position:absolute;left:962px;top:195px;width:1px;height:2px;background:#8A8A8A;"></div><div style="position:absolute;left:974px;top:193px;width:1px;height:6px;background:#555;"></div><div style="position:absolute;left:986px;top:195px;width:1px;height:2px;background:#8A8A8A;"></div><div style="position:absolute;left:998px;top:195px;width:1px;height:2px;background:#8A8A8A;"></div><div style="position:absolute;left:1010px;top:195px;width:1px;height:2px;background:#8A8A8A;"></div><div class="t" style="left:1012.5px;top:190px;width:20px;text-align:center;font-size:13px;line-height:13px;color:#505050">1</div><div style="position:absolute;left:1034px;top:195px;width:1px;height:2px;background:#8A8A8A;"></div><div style="position:absolute;left:1046px;top:195px;width:1px;height:2px;background:#8A8A8A;"></div><div style="position:absolute;left:1058px;top:195px;width:1px;height:2px;background:#8A8A8A;"></div><div style="position:absolute;left:1070px;top:193px;width:1px;height:6px;background:#555;"></div><div style="position:absolute;left:1082px;top:195px;width:1px;height:2px;background:#8A8A8A;"></div><div style="position:absolute;left:1094px;top:195px;width:1px;height:2px;background:#8A8A8A;"></div><div style="position:absolute;left:1106px;top:195px;width:1px;height:2px;background:#8A8A8A;"></div><div class="t" style="left:1108.5px;top:190px;width:20px;text-align:center;font-size:13px;line-height:13px;color:#505050">0</div><div style="position:absolute;left:1130px;top:195px;width:1px;height:2px;background:#8A8A8A;"></div><div style="position:absolute;left:1142px;top:195px;width:1px;height:2px;background:#8A8A8A;"></div><div style="position:absolute;left:1154px;top:195px;width:1px;height:2px;background:#8A8A8A;"></div><div style="position:absolute;left:1166px;top:193px;width:1px;height:6px;background:#555;"></div><div style="position:absolute;left:1178px;top:195px;width:1px;height:2px;background:#8A8A8A;"></div><div style="position:absolute;left:1190px;top:195px;width:1px;height:2px;background:#8A8A8A;"></div><div style="position:absolute;left:1202px;top:195px;width:1px;height:2px;background:#8A8A8A;"></div><div class="t" style="left:1204.5px;top:190px;width:20px;text-align:center;font-size:13px;line-height:13px;color:#505050">1</div><div style="position:absolute;left:1226px;top:195px;width:1px;height:2px;background:#8A8A8A;"></div><div style="position:absolute;left:1238px;top:195px;width:1px;height:2px;background:#8A8A8A;"></div><div style="position:absolute;left:1250px;top:195px;width:1px;height:2px;background:#8A8A8A;"></div><div style="position:absolute;left:1262px;top:193px;width:1px;height:6px;background:#555;"></div><div style="position:absolute;left:1274px;top:195px;width:1px;height:2px;background:#8A8A8A;"></div><div style="position:absolute;left:1286px;top:195px;width:1px;height:2px;background:#8A8A8A;"></div><div style="position:absolute;left:1298px;top:195px;width:1px;height:2px;background:#8A8A8A;"></div><div class="t" style="left:1300.5px;top:190px;width:20px;text-align:center;font-size:13px;line-height:13px;color:#505050">2</div><div style="position:absolute;left:1322px;top:195px;width:1px;height:2px;background:#8A8A8A;"></div><div style="position:absolute;left:1334px;top:195px;width:1px;height:2px;background:#8A8A8A;"></div><div style="position:absolute;left:1346px;top:195px;width:1px;height:2px;background:#8A8A8A;"></div><div style="position:absolute;left:1358px;top:193px;width:1px;height:6px;background:#555;"></div><div style="position:absolute;left:1370px;top:195px;width:1px;height:2px;background:#8A8A8A;"></div><div style="position:absolute;left:1382px;top:195px;width:1px;height:2px;background:#8A8A8A;"></div><div style="position:absolute;left:1394px;top:195px;width:1px;height:2px;background:#8A8A8A;"></div><div class="t" style="left:1396.5px;top:190px;width:20px;text-align:center;font-size:13px;line-height:13px;color:#505050">3</div><div style="position:absolute;left:1418px;top:195px;width:1px;height:2px;background:#8A8A8A;"></div><div style="position:absolute;left:1430px;top:195px;width:1px;height:2px;background:#8A8A8A;"></div><div style="position:absolute;left:1442px;top:195px;width:1px;height:2px;background:#8A8A8A;"></div><div style="position:absolute;left:1454px;top:193px;width:1px;height:6px;background:#555;"></div><div style="position:absolute;left:1466px;top:195px;width:1px;height:2px;background:#8A8A8A;"></div><div style="position:absolute;left:1478px;top:195px;width:1px;height:2px;background:#8A8A8A;"></div><div style="position:absolute;left:1490px;top:195px;width:1px;height:2px;background:#8A8A8A;"></div><div class="t" style="left:1492.5px;top:190px;width:20px;text-align:center;font-size:13px;line-height:13px;color:#505050">4</div><div style="position:absolute;left:1514px;top:195px;width:1px;height:2px;background:#8A8A8A;"></div><div style="position:absolute;left:1526px;top:195px;width:1px;height:2px;background:#8A8A8A;"></div><div style="position:absolute;left:1538px;top:195px;width:1px;height:2px;background:#8A8A8A;"></div><div style="position:absolute;left:1550px;top:193px;width:1px;height:6px;background:#555;"></div><div style="position:absolute;left:1562px;top:195px;width:1px;height:2px;background:#8A8A8A;"></div><div style="position:absolute;left:1574px;top:195px;width:1px;height:2px;background:#8A8A8A;"></div><div style="position:absolute;left:1586px;top:195px;width:1px;height:2px;background:#8A8A8A;"></div><div style="position:absolute;left:310px;top:224px;width:17px;height:719px;background:#FFFFFF;"></div><div style="position:absolute;left:317px;top:236px;width:2px;height:1px;background:#8A8A8A;"></div><div style="position:absolute;left:315px;top:248px;width:6px;height:1px;background:#555;"></div><div style="position:absolute;left:317px;top:260px;width:2px;height:1px;background:#8A8A8A;"></div><div style="position:absolute;left:317px;top:272px;width:2px;height:1px;background:#8A8A8A;"></div><div style="position:absolute;left:317px;top:284px;width:2px;height:1px;background:#8A8A8A;"></div><div class="t" style="left:308.5px;top:289.5px;width:20px;text-align:center;font-size:13px;line-height:13px;color:#505050;transform:rotate(-90deg);transform-origin:50% 50%">3</div><div style="position:absolute;left:317px;top:308px;width:2px;height:1px;background:#8A8A8A;"></div><div style="position:absolute;left:317px;top:320px;width:2px;height:1px;background:#8A8A8A;"></div><div style="position:absolute;left:317px;top:332px;width:2px;height:1px;background:#8A8A8A;"></div><div style="position:absolute;left:315px;top:344px;width:6px;height:1px;background:#555;"></div><div style="position:absolute;left:317px;top:356px;width:2px;height:1px;background:#8A8A8A;"></div><div style="position:absolute;left:317px;top:368px;width:2px;height:1px;background:#8A8A8A;"></div><div style="position:absolute;left:317px;top:380px;width:2px;height:1px;background:#8A8A8A;"></div><div class="t" style="left:308.5px;top:385.5px;width:20px;text-align:center;font-size:13px;line-height:13px;color:#505050;transform:rotate(-90deg);transform-origin:50% 50%">2</div><div style="position:absolute;left:317px;top:404px;width:2px;height:1px;background:#8A8A8A;"></div><div style="position:absolute;left:317px;top:416px;width:2px;height:1px;background:#8A8A8A;"></div><div style="position:absolute;left:317px;top:428px;width:2px;height:1px;background:#8A8A8A;"></div><div style="position:absolute;left:315px;top:440px;width:6px;height:1px;background:#555;"></div><div style="position:absolute;left:317px;top:452px;width:2px;height:1px;background:#8A8A8A;"></div><div style="position:absolute;left:317px;top:464px;width:2px;height:1px;background:#8A8A8A;"></div><div style="position:absolute;left:317px;top:476px;width:2px;height:1px;background:#8A8A8A;"></div><div class="t" style="left:308.5px;top:481.5px;width:20px;text-align:center;font-size:13px;line-height:13px;color:#505050;transform:rotate(-90deg);transform-origin:50% 50%">1</div><div style="position:absolute;left:317px;top:500px;width:2px;height:1px;background:#8A8A8A;"></div><div style="position:absolute;left:317px;top:512px;width:2px;height:1px;background:#8A8A8A;"></div><div style="position:absolute;left:317px;top:524px;width:2px;height:1px;background:#8A8A8A;"></div><div style="position:absolute;left:315px;top:536px;width:6px;height:1px;background:#555;"></div><div style="position:absolute;left:317px;top:548px;width:2px;height:1px;background:#8A8A8A;"></div><div style="position:absolute;left:317px;top:560px;width:2px;height:1px;background:#8A8A8A;"></div><div style="position:absolute;left:317px;top:572px;width:2px;height:1px;background:#8A8A8A;"></div><div class="t" style="left:308.5px;top:577.5px;width:20px;text-align:center;font-size:13px;line-height:13px;color:#505050;transform:rotate(-90deg);transform-origin:50% 50%">0</div><div style="position:absolute;left:317px;top:596px;width:2px;height:1px;background:#8A8A8A;"></div><div style="position:absolute;left:317px;top:608px;width:2px;height:1px;background:#8A8A8A;"></div><div style="position:absolute;left:317px;top:620px;width:2px;height:1px;background:#8A8A8A;"></div><div style="position:absolute;left:315px;top:632px;width:6px;height:1px;background:#555;"></div><div style="position:absolute;left:317px;top:644px;width:2px;height:1px;background:#8A8A8A;"></div><div style="position:absolute;left:317px;top:656px;width:2px;height:1px;background:#8A8A8A;"></div><div style="position:absolute;left:317px;top:668px;width:2px;height:1px;background:#8A8A8A;"></div><div class="t" style="left:308.5px;top:673.5px;width:20px;text-align:center;font-size:13px;line-height:13px;color:#505050;transform:rotate(-90deg);transform-origin:50% 50%">1</div><div style="position:absolute;left:317px;top:692px;width:2px;height:1px;background:#8A8A8A;"></div><div style="position:absolute;left:317px;top:704px;width:2px;height:1px;background:#8A8A8A;"></div><div style="position:absolute;left:317px;top:716px;width:2px;height:1px;background:#8A8A8A;"></div><div style="position:absolute;left:315px;top:728px;width:6px;height:1px;background:#555;"></div><div style="position:absolute;left:317px;top:740px;width:2px;height:1px;background:#8A8A8A;"></div><div style="position:absolute;left:317px;top:752px;width:2px;height:1px;background:#8A8A8A;"></div><div style="position:absolute;left:317px;top:764px;width:2px;height:1px;background:#8A8A8A;"></div><div class="t" style="left:308.5px;top:769.5px;width:20px;text-align:center;font-size:13px;line-height:13px;color:#505050;transform:rotate(-90deg);transform-origin:50% 50%">2</div><div style="position:absolute;left:317px;top:788px;width:2px;height:1px;background:#8A8A8A;"></div><div style="position:absolute;left:317px;top:800px;width:2px;height:1px;background:#8A8A8A;"></div><div style="position:absolute;left:317px;top:812px;width:2px;height:1px;background:#8A8A8A;"></div><div style="position:absolute;left:315px;top:824px;width:6px;height:1px;background:#555;"></div><div style="position:absolute;left:317px;top:836px;width:2px;height:1px;background:#8A8A8A;"></div><div style="position:absolute;left:317px;top:848px;width:2px;height:1px;background:#8A8A8A;"></div><div style="position:absolute;left:317px;top:860px;width:2px;height:1px;background:#8A8A8A;"></div><div class="t" style="left:308.5px;top:865.5px;width:20px;text-align:center;font-size:13px;line-height:13px;color:#505050;transform:rotate(-90deg);transform-origin:50% 50%">3</div><div style="position:absolute;left:317px;top:884px;width:2px;height:1px;background:#8A8A8A;"></div><div style="position:absolute;left:317px;top:896px;width:2px;height:1px;background:#8A8A8A;"></div><div style="position:absolute;left:317px;top:908px;width:2px;height:1px;background:#8A8A8A;"></div><div style="position:absolute;left:315px;top:920px;width:6px;height:1px;background:#555;"></div><div style="position:absolute;left:317px;top:932px;width:2px;height:1px;background:#8A8A8A;"></div><div style="position:absolute;left:310px;top:688px;width:17px;height:1px;background:repeating-linear-gradient(90deg,#E04A2A 0 2px,transparent 2px 4px)"></div><div style="position:absolute;left:1900px;top:185px;width:20px;height:704px;background:#DADADA;"></div><div style="position:absolute;left:1900px;top:185px;width:20px;height:19px;background:#FFFFFF;box-sizing:border-box;border:1px solid #C8C8C8"></div><div style="position:absolute;left:1900px;top:212px;width:20px;height:29px;background:#FFFFFF;box-sizing:border-box;border:1px solid #ABABAB"></div><div style="position:absolute;left:1900px;top:870px;width:20px;height:19px;background:#FFFFFF;box-sizing:border-box;border:1px solid #C8C8C8"></div><div style="position:absolute;left:305px;top:957px;width:1615px;height:1px;background:#C6C6C6;"></div><div style="position:absolute;left:0px;top:1003px;width:1920px;height:27px;background:#F1F1F1;"></div><div style="position:absolute;left:0px;top:1003px;width:1920px;height:1px;background:#D5D5D5;"></div><div style="position:absolute;left:1519px;top:1004px;width:41px;height:26px;background:#C6C6C6;"></div><div style="position:absolute;left:0px;top:1030px;width:1920px;height:50px;background:linear-gradient(90deg,#213643 0%,#223744 45%,#1E2C46 100%);"></div><div style="position:absolute;left:60px;top:1030px;width:360px;height:50px;background:#F2F2F2;box-sizing:border-box;border-top:1px solid #C8C8C8"></div><div style="position:absolute;left:794px;top:1030px;width:61px;height:50px;background:rgba(255,255,255,0.2);"></div><div style="position:absolute;left:489px;top:1077px;width:51px;height:3px;background:#76B9ED;"></div><div style="position:absolute;left:613px;top:1077px;width:51px;height:3px;background:#76B9ED;"></div><div style="position:absolute;left:675px;top:1077px;width:51px;height:3px;background:#76B9ED;"></div><div style="position:absolute;left:737px;top:1077px;width:51px;height:3px;background:#76B9ED;"></div><div style="position:absolute;left:794px;top:1077px;width:61px;height:3px;background:#76B9ED;"></div><div style="position:absolute;left:637px;top:223px;width:962px;height:722px;background:#C8C8C8;"></div><div style="position:absolute;left:638px;top:224px"><div class="slide">
<div class="sbg"></div>
<div style="position:absolute;left:12px;top:0;width:4px;height:720px;background:rgba(255,255,255,0.06)"></div><div style="position:absolute;left:40px;top:0;width:35px;height:720px;background:rgba(255,255,255,0.05)"></div><div style="position:absolute;left:102px;top:0;width:36px;height:720px;background:rgba(255,255,255,0.07)"></div><div style="position:absolute;left:165px;top:0;width:8px;height:720px;background:rgba(255,255,255,0.08)"></div><div style="position:absolute;left:250px;top:0;width:46px;height:720px;background:rgba(255,255,255,0.06)"></div><div style="position:absolute;left:320px;top:0;width:30px;height:720px;background:rgba(255,255,255,0.05)"></div><div style="position:absolute;left:396px;top:0;width:20px;height:720px;background:rgba(255,255,255,0.07)"></div><div style="position:absolute;left:430px;top:0;width:60px;height:720px;background:rgba(255,255,255,0.04)"></div><div style="position:absolute;left:520px;top:0;width:18px;height:720px;background:rgba(255,255,255,0.06)"></div><div style="position:absolute;left:560px;top:0;width:40px;height:720px;background:rgba(255,255,255,0.05)"></div><div style="position:absolute;left:610px;top:0;width:12px;height:720px;background:rgba(255,255,255,0.07)"></div><div style="position:absolute;left:700px;top:0;width:50px;height:720px;background:rgba(255,255,255,0.05)"></div><div style="position:absolute;left:790px;top:0;width:28px;height:720px;background:rgba(255,255,255,0.06)"></div><div style="position:absolute;left:860px;top:0;width:18px;height:720px;background:rgba(255,255,255,0.05)"></div><div style="position:absolute;left:900px;top:0;width:40px;height:720px;background:rgba(255,255,255,0.07)"></div><div style="position:absolute;left:945px;top:0;width:10px;height:720px;background:rgba(255,255,255,0.05)"></div><div style="position:absolute;left:0;top:0;width:9px;height:720px;background:rgba(150,215,40,0.25)"></div><div style="position:absolute;left:20px;top:0;width:640px;height:300px;background:radial-gradient(ellipse 360px 280px at 220px 0px, rgba(255,255,255,0.2), rgba(255,255,255,0) 100%)"></div><svg width="960" height="720" style="position:absolute;left:0;top:0"><g fill="none" stroke="rgba(255,255,255,0.22)" stroke-width="1">
<path d="M4,380 L34,364 L60,380 L60,420 L34,436 L4,420"/><path d="M4,600 L34,586 L60,600"/><path d="M4,640 L60,668"/><path d="M4,675 L60,678"/>
<path d="M20,720 L20,670 L60,650"/><path d="M100,720 L160,690 L240,720"/><path d="M300,720 L380,690"/><path d="M520,690 L620,720"/>
<path d="M0,708 Q400,680 960,700"/><path d="M640,685 L700,720"/><path d="M860,690 L940,720"/><path d="M900,120 L960,90"/><path d="M900,330 L960,296 M900,370 L960,400"/>
</g></svg>
<div class="sinner" style=""></div>
<div style="position:absolute;left:478px;top:-3px;width:388px;height:75px;box-sizing:border-box;border:2px solid #6BA414;background:#F4F4F4"></div><div style="position:absolute;left:488px;top:-1px;width:368px;height:64px;background:#706656"></div><div style="position:absolute;left:477px;top:58px;width:307px;height:18px;background:#FFFFFF"></div>
<div style="position:absolute;left:49px;top:36px;width:863px;height:648px;overflow:hidden"><div style="position:absolute;left:-49px;top:-36px;width:960px;height:720px"><svg width="960" height="720" style="position:absolute;left:0;top:0" viewBox="0 0 960 720">
<g fill="#E6FCDA" stroke="#E6FCDA" stroke-width="6" stroke-linejoin="round"><path d="M276.0,501.0 L287.0,488.0 L292.0,476.0 L307.0,476.0 L323.5,468.6 L337.0,464.0 L363.5,471.6 L372.0,488.0 L384.0,513.0 L407.0,511.0 L434.6,508.0 L438.0,521.0 L412.0,528.0 L375.0,539.7 L354.6,560.4 L316.0,575.0 L289.4,545.6 Z"/><path d="M242.0,452.0 L255.0,451.0 L267.0,466.0 L276.0,483.0 L262.0,486.0 L250.0,481.0 Z"/><path d="M331.0,456.0 L334.0,426.0 L347.0,396.0 L358.0,391.0 L361.0,416.0 L352.0,456.0 Z"/><path d="M366.0,464.0 L377.0,436.0 L402.0,402.0 L414.0,402.0 L410.0,426.0 L382.0,464.0 Z"/><path d="M386.0,488.0 L407.0,471.0 L432.0,452.0 L439.0,460.0 L422.0,481.0 L392.0,494.0 Z"/><path d="M507.6,116.5 L528.1,115.3 L554.6,129.7 L560.6,147.8 L554.6,156.2 L540.1,152.6 L520.9,151.4 L511.3,134.5 Z"/><path d="M571.4,156.2 L593.1,152.6 L622.0,161.0 L652.1,169.4 L636.4,173.0 L617.2,175.4 L605.1,183.9 L600.3,197.1 L588.3,209.1 L578.7,192.3 L573.8,168.2 Z"/><path d="M590.7,206.7 L605.1,192.3 L626.8,199.5 L646.1,211.6 L679.8,206.7 L699.0,230.8 L720.7,264.5 L732.7,300.6 L724.0,346.0 L692.0,361.0 L641.3,351.0 L617.2,303.0 L571.4,279.0 L542.6,252.5 L547.4,230.8 L569.0,221.2 Z"/><path d="M442.0,264.0 L462.0,250.0 L516.1,233.2 L537.7,230.8 L540.1,240.4 L520.9,250.1 L472.0,268.0 L447.0,276.0 Z"/><path d="M467.0,321.0 L492.0,295.8 L520.9,281.4 L545.0,274.1 L547.4,286.2 L523.3,300.6 L492.0,322.7 L474.0,332.0 Z"/><path d="M554.6,317.5 L571.4,305.4 L585.9,307.8 L578.7,324.7 L559.4,334.3 Z"/></g>
<g fill="none" stroke="#E6FCDA">
<circle cx="473.5" cy="364.5" r="297" stroke-width="8"/>
<circle cx="473.5" cy="364.5" r="279" stroke-width="12"/>
</g>
<circle cx="210.89999999999998" cy="242.7" r="48.3" fill="#FFFFFF" stroke="#E6FCDA" stroke-width="6.7"/>
<path fill="#E6FCDA" d="M179.79999999999995,218.2 H242 V268.8 H219.20000000000005 V243.8 L210.89999999999998,252.7 L202.60000000000002,243.8 V268.8 H179.79999999999995 Z"/>
</svg></div></div>
<div style="position:absolute;left:468px;top:100px;width:62px;height:13px;background:#0089D2"></div><div style="position:absolute;left:468px;top:100px;width:14px;height:41px;background:#0089D2"></div><div style="position:absolute;left:516px;top:100px;width:14px;height:26px;background:#0089D2"></div><div style="position:absolute;left:468px;top:144px;width:14px;height:41px;background:#231F20"></div><div style="position:absolute;left:468px;top:173px;width:62px;height:12px;background:#231F20"></div><div style="position:absolute;left:492px;top:152px;width:14px;height:33px;background:#231F20"></div><div style="position:absolute;left:516px;top:160px;width:14px;height:25px;background:#231F20"></div><div style="position:absolute;left:491.29999999999995px;top:132.5px;width:15.4px;height:15.4px;border-radius:50%;background:#E63323"></div><div style="position:absolute;left:519px;top:147.3px;width:8px;height:8px;border-radius:50%;background:#E63323"></div>
<div class="t" style="left:570.75px;top:12.00px;font-size:17px;line-height:17px;font-weight:700;color:#8CD84A;transform:scaleX(0.9531);">Računarsko-funkcionalno</div>
<div class="t" style="left:590.04px;top:30.40px;font-size:17px;line-height:17px;font-weight:700;color:#8CD84A;transform:scaleX(0.9622);">razmišljanje i učenje</div>
<div class="t" style="left:149.00px;top:215.80px;font-size:19px;line-height:19px;font-weight:400;color:#404036;transform:scaleX(1.0634);text-shadow:1px 1px 1px rgba(0,0,0,0.35);">Visoka škola strukovnih studija za obrazovanje vaspitača i trenera subotica</div>
<div class="t" style="left:148.64px;top:325.80px;font-size:53px;line-height:53px;font-weight:700;color:#93C300;transform:scaleX(1.0190);">Računarsko-funkcionalno</div>
<div class="t" style="left:214.62px;top:389.60px;font-size:53px;line-height:53px;font-weight:700;color:#93C300;transform:scaleX(1.0260);">razmišljanje i učenje</div>
<div class="t" style="left:375.08px;top:625.50px;font-size:25px;line-height:25px;font-weight:700;color:#000000;transform:scaleX(0.9583);">Dr Slavoljub Hilčenko</div>
<div class="t" style="left:485.09px;top:188.00px;font-size:15px;line-height:15px;font-weight:700;color:#111111;transform:scaleX(0.9062);">1871</div>

</div></div><div class="t" style="left:656.30px;top:12.80px;font-size:15px;line-height:15px;font-weight:400;color:#FFFFFF;">Рачунарско-функционално размишање и учење - PowerPoint (Product Activation Failed)</div>
<div class="t" style="left:24.53px;top:48.50px;font-size:15px;line-height:15px;font-weight:400;color:#FFFFFF;transform:scaleX(0.9696);">File</div>
<div class="t" style="left:89.47px;top:48.30px;font-size:15px;line-height:15px;font-weight:400;color:#B7472A;transform:scaleX(1.0333);">Home</div>
<div class="t" style="left:160.00px;top:48.30px;font-size:15px;line-height:15px;font-weight:400;color:#FFFFFF;transform:scaleX(0.8824);">WPS PDF</div>
<div class="t" style="left:248.00px;top:48.30px;font-size:15px;line-height:15px;font-weight:400;color:#FFFFFF;">Insert</div>
<div class="t" style="left:312.98px;top:48.30px;font-size:15px;line-height:15px;font-weight:400;color:#FFFFFF;transform:scaleX(1.0222);">Design</div>
<div class="t" style="left:388.80px;top:48.30px;font-size:15px;line-height:15px;font-weight:400;color:#FFFFFF;transform:scaleX(0.9736);">Transitions</div>
<div class="t" style="left:487.80px;top:48.30px;font-size:15px;line-height:15px;font-weight:400;color:#FFFFFF;transform:scaleX(1.0162);">Animations</div>
<div class="t" style="left:590.61px;top:48.30px;font-size:15px;line-height:15px;font-weight:400;color:#FFFFFF;transform:scaleX(0.9919);">Slide Show</div>
<div class="t" style="left:693.43px;top:48.30px;font-size:15px;line-height:15px;font-weight:400;color:#FFFFFF;transform:scaleX(0.9688);">Review</div>
<div class="t" style="left:770.00px;top:48.30px;font-size:15px;line-height:15px;font-weight:400;color:#FFFFFF;transform:scaleX(0.9937);">View</div>
<div class="t" style="left:831.00px;top:48.30px;font-size:15px;line-height:15px;font-weight:400;color:#FFFFFF;transform:scaleX(1.0212);">Acrobat</div>
<div class="t" style="left:935.00px;top:48.30px;font-size:15px;line-height:15px;font-weight:400;color:#EBBDAF;">Tell me what you want to do...</div>
<div class="t" style="left:1773.30px;top:48.50px;font-size:15px;line-height:15px;font-weight:400;color:#FFFFFF;transform:scaleX(1.0045);">Sign in</div>
<div class="t" style="left:1858.16px;top:48.50px;font-size:15px;line-height:15px;font-weight:400;color:#FFFFFF;transform:scaleX(0.9385);">Share</div>
<div class="t" style="left:11.60px;top:122.00px;font-size:15px;line-height:15px;font-weight:400;color:#444444;transform:scaleX(0.8986);">Paste</div>
<div class="t" style="left:79.03px;top:81.50px;font-size:15px;line-height:15px;font-weight:400;color:#444444;transform:scaleX(0.9659);">Cut</div>
<div class="t" style="left:79.01px;top:109.30px;font-size:15px;line-height:15px;font-weight:400;color:#444444;transform:scaleX(0.9926);">Copy</div>
<div class="t" style="left:79.02px;top:137.00px;font-size:15px;line-height:15px;font-weight:400;color:#444444;transform:scaleX(0.9770);">Format Painter</div>
<div class="t" style="left:54.57px;top:164.00px;font-size:15px;line-height:15px;font-weight:400;color:#555555;transform:scaleX(0.9274);">Clipboard</div>
<div class="t" style="left:201.49px;top:122.00px;font-size:15px;line-height:15px;font-weight:400;color:#444444;transform:scaleX(1.0086);">New</div>
<div class="t" style="left:194.50px;top:142.00px;font-size:15px;line-height:15px;font-weight:400;color:#444444;">Slide</div>
<div class="t" style="left:267.27px;top:81.50px;font-size:15px;line-height:15px;font-weight:400;color:#444444;transform:scaleX(0.9773);">Layout</div>
<div class="t" style="left:267.32px;top:109.30px;font-size:15px;line-height:15px;font-weight:400;color:#444444;transform:scaleX(0.9342);">Reset</div>
<div class="t" style="left:267.24px;top:137.00px;font-size:15px;line-height:15px;font-weight:400;color:#444444;transform:scaleX(1.0104);">Section</div>
<div class="t" style="left:245.40px;top:164.00px;font-size:15px;line-height:15px;font-weight:400;color:#555555;transform:scaleX(0.8526);">Slides</div>
<div class="t" style="left:447.14px;top:164.00px;font-size:15px;line-height:15px;font-weight:400;color:#555555;transform:scaleX(0.8621);">Font</div>
<div class="t" style="left:818.70px;top:81.10px;font-size:15px;line-height:15px;font-weight:400;color:#A6A6A6;transform:scaleX(1.0111);">Text Direction</div>
<div class="t" style="left:818.70px;top:109.40px;font-size:15px;line-height:15px;font-weight:400;color:#A6A6A6;transform:scaleX(1.0046);">Align Text</div>
<div class="t" style="left:817.70px;top:137.00px;font-size:15px;line-height:15px;font-weight:400;color:#A6A6A6;">Convert to SmartArt</div>
<div class="t" style="left:745.51px;top:164.00px;font-size:15px;line-height:15px;font-weight:400;color:#555555;transform:scaleX(0.8882);">Paragraph</div>
<div class="t" style="left:1146.25px;top:122.00px;font-size:15px;line-height:15px;font-weight:400;color:#444444;transform:scaleX(0.9906);">Arrange</div>
<div class="t" style="left:1208.99px;top:122.00px;font-size:15px;line-height:15px;font-weight:400;color:#A6A6A6;transform:scaleX(1.0135);">Quick</div>
<div class="t" style="left:1203.56px;top:142.00px;font-size:15px;line-height:15px;font-weight:400;color:#A6A6A6;transform:scaleX(0.9423);">Styles</div>
<div class="t" style="left:1280.28px;top:79.90px;font-size:15px;line-height:15px;font-weight:400;color:#A6A6A6;transform:scaleX(0.9692);">Shape Fill</div>
<div class="t" style="left:1280.27px;top:106.80px;font-size:15px;line-height:15px;font-weight:400;color:#A6A6A6;transform:scaleX(0.9840);">Shape Outline</div>
<div class="t" style="left:1280.29px;top:133.80px;font-size:15px;line-height:15px;font-weight:400;color:#A6A6A6;transform:scaleX(0.9647);">Shape Effects</div>
<div class="t" style="left:1148.36px;top:164.00px;font-size:15px;line-height:15px;font-weight:400;color:#555555;transform:scaleX(0.8868);">Drawing</div>
<div class="t" style="left:1423.40px;top:80.40px;font-size:15px;line-height:15px;font-weight:400;color:#444444;transform:scaleX(1.0037);">Find</div>
<div class="t" style="left:1423.43px;top:107.50px;font-size:15px;line-height:15px;font-weight:400;color:#444444;transform:scaleX(0.9667);">Replace</div>
<div class="t" style="left:1423.44px;top:134.60px;font-size:15px;line-height:15px;font-weight:400;color:#444444;transform:scaleX(0.9561);">Select</div>
<div class="t" style="left:1427.51px;top:164.20px;font-size:15px;line-height:15px;font-weight:400;color:#555555;transform:scaleX(0.8932);">Editing</div>
<div class="t" style="left:1527.13px;top:122.40px;font-size:15px;line-height:15px;font-weight:400;color:#444444;transform:scaleX(0.9659);">Create</div>
<div class="t" style="left:1530.49px;top:141.90px;font-size:15px;line-height:15px;font-weight:400;color:#444444;transform:scaleX(0.9098);">a PDF</div>
<div class="t" style="left:1506.20px;top:164.20px;font-size:15px;line-height:15px;font-weight:400;color:#555555;transform:scaleX(0.9010);">Adobe Acrobat</div>
<div class="t" style="left:1604.93px;top:122.40px;font-size:15px;line-height:15px;font-weight:400;color:#444444;transform:scaleX(0.9705);">Create</div>
<div class="t" style="left:1614.43px;top:141.90px;font-size:15px;line-height:15px;font-weight:400;color:#444444;transform:scaleX(0.8690);">PDF</div>
<div class="t" style="left:1662.29px;top:122.40px;font-size:15px;line-height:15px;font-weight:400;color:#444444;transform:scaleX(1.0143);">Sign</div>
<div class="t" style="left:1627.50px;top:164.20px;font-size:15px;line-height:15px;font-weight:400;color:#555555;transform:scaleX(0.7574);">WPS PDF</div>
<div class="t" style="left:6.12px;top:1008.30px;font-size:15px;line-height:15px;font-weight:400;color:#444444;transform:scaleX(0.8841);">Slide 1 of 22</div>
<div class="t" style="left:134.15px;top:1008.30px;font-size:15px;line-height:15px;font-weight:400;color:#444444;transform:scaleX(0.8520);">English (United States)</div>
<div class="t" style="left:316.03px;top:968.30px;font-size:19px;line-height:19px;font-weight:400;color:#595959;transform:scaleX(0.9667);">Click to add notes</div>
<div class="t" style="left:1360.40px;top:1008.20px;font-size:15px;line-height:15px;font-weight:400;color:#444444;transform:scaleX(0.9000);">Notes</div>
<div class="t" style="left:1436.64px;top:1008.20px;font-size:15px;line-height:15px;font-weight:400;color:#444444;transform:scaleX(0.8620);">Comments</div>
<div class="t" style="left:1856.48px;top:1007.90px;font-size:15px;line-height:15px;font-weight:400;color:#444444;transform:scaleX(0.8172);">80%</div>
<div class="t" style="left:110.50px;top:1045.80px;font-size:19px;line-height:19px;font-weight:400;color:#1A1A1A;transform:scaleX(0.9725);">Type here to search</div>
<div class="t" style="left:1734.46px;top:1047.80px;font-size:15px;line-height:15px;font-weight:400;color:#FFFFFF;transform:scaleX(0.8414);">SRP</div>
<div class="t" style="left:1785.25px;top:1035.70px;font-size:15px;line-height:15px;font-weight:400;color:#FFFFFF;transform:scaleX(0.9500);">6:20 PM</div>
<div class="t" style="left:1778.16px;top:1058.30px;font-size:15px;line-height:15px;font-weight:400;color:#FFFFFF;transform:scaleX(1.0359);">11/5/2025</div>
<div class="t" style="left:15.90px;top:204.00px;font-size:18px;line-height:18px;font-weight:400;color:#D24726;transform:scaleX(0.7000);">1</div>
<div class="t" style="left:14.94px;top:393.50px;font-size:18px;line-height:18px;font-weight:400;color:#444444;transform:scaleX(1.0625);">2</div>
<div class="t" style="left:14.94px;top:582.50px;font-size:18px;line-height:18px;font-weight:400;color:#444444;transform:scaleX(1.0625);">3</div>
<div class="t" style="left:16.00px;top:771.50px;font-size:18px;line-height:18px;font-weight:400;color:#444444;transform:scaleX(0.8500);">4</div>
<div class="t" style="left:15.22px;top:960.00px;font-size:18px;line-height:18px;font-weight:400;color:#444444;transform:scaleX(1.0312);">5</div><svg width="1920" height="1080" style="position:absolute;left:0;top:0" viewBox="0 0 1920 1080"><path d="M25,11 h14.5 l1.5,1.5 v14.5 h-16 Z" fill="#FFFFFF"/>
<rect x="27" y="12.5" width="12" height="7" fill="#B7472A"/>
<path d="M80.5,17 h7 a5.2,5.2 0 0 1 0,10.4 h-1.5" fill="none" stroke="#D5826D" stroke-width="2.6"/>
<path d="M77,17 l5.8,-5.3 v10.6 Z" fill="#D5826D"/>
<path d="M106,17.5 h6 l-3,3 Z" fill="#D5826D"/>
<path d="M148.8,14.2 a6.6,6.6 0 1 1 -6.4,-2.3" fill="none" stroke="#D5826D" stroke-width="2.6"/>
<path d="M145.5,10.8 l7,-0.2 l-1.8,6.4 Z" fill="#D5826D"/>
<rect x="29.3" y="21.5" width="7.2" height="5.5" fill="#B7472A"/><rect x="31.4" y="23.6" width="3" height="3.4" fill="#FFFFFF"/>
<rect x="191" y="10" width="19" height="2" fill="#FFFFFF"/>
<path d="M193.5,12 v9 h7.5" fill="none" stroke="#FFFFFF" stroke-width="1.2"/>
<rect x="196" y="15" width="5" height="1" fill="#FFFFFF"/><rect x="196" y="17" width="4" height="1" fill="#FFFFFF"/>
<circle cx="206" cy="18.8" r="4.3" fill="none" stroke="#FFFFFF" stroke-width="1.1"/>
<path d="M204.8,16.3 l3.6,2.5 l-3.6,2.5 Z" fill="#FFFFFF"/>
<path d="M200,22 l-4,6 h9 Z" fill="#FFFFFF"/><rect x="198.5" y="25" width="3.5" height="1.2" fill="#B7472A"/>
<rect x="255" y="16" width="5" height="1" fill="#FFFFFF"/><path d="M254.8,19.3 h5.4 l-2.7,2.8 Z" fill="#FFFFFF"/>
<rect x="1712.6" y="13.6" width="14.8" height="10.6" fill="none" stroke="#FFFFFF" stroke-width="1.2"/>
<rect x="1712.6" y="14.6" width="14.8" height="0.9" fill="#FFFFFF"/>
<path d="M1720,24 v-6.5" stroke="#FFFFFF" stroke-width="1.6"/><path d="M1716,20 l4,-3.5 l4,3.5" fill="none" stroke="#FFFFFF" stroke-width="1.4"/>
<rect x="1771" y="20.8" width="11.7" height="1.6" fill="#FFFFFF"/>
<path d="M1831,14.5 v-2 h8.4 v8 h-2.4" fill="none" stroke="#FFFFFF" stroke-width="1.2"/>
<rect x="1828.6" y="15.2" width="8" height="8" fill="none" stroke="#FFFFFF" stroke-width="1.2"/>
<path d="M1885.5,13.5 l11,11 M1896.5,13.5 l-11,11" stroke="#FFFFFF" stroke-width="1.6"/>
<path d="M917.2,55.8 a5.4,5.4 0 1 1 8.6,0 l-2.8,3.4 h-3 Z" fill="none" stroke="#E0A090" stroke-width="1.6" stroke-linejoin="round"/>
<rect x="918" y="60.6" width="7" height="3.8" rx="0.8" fill="#E0A090"/>
<circle cx="1845" cy="52.3" r="5.3" fill="none" stroke="#FFFFFF" stroke-width="1.3"/>
<path d="M1836.5,66 c0.5,-5 4,-8 8.5,-8 c1.5,0 3,0.3 4,1" fill="none" stroke="#FFFFFF" stroke-width="1.3"/>
<path d="M1850,57 v9 M1845.5,61.5 h9" stroke="#FFFFFF" stroke-width="1.3"/>
<rect x="14.8" y="82.8" width="27.2" height="31" rx="1.5" fill="#EBBF74"/>
<rect x="20" y="81.8" width="17" height="5.3" rx="1" fill="#6D6D6D"/><rect x="25.2" y="79" width="7" height="3.5" rx="0.8" fill="#6D6D6D"/>
<rect x="27.2" y="80.6" width="2.8" height="2.8" fill="#F1F1F1"/>
<rect x="18.5" y="87.2" width="20" height="1.2" fill="#F1F1F1"/>
<path d="M34.3,97.3 h9.5 l4.5,4.5 v14.7 h-14 Z" fill="#FFFFFF" stroke="#6D6D6D" stroke-width="1"/>
<path d="M43.8,97.3 v4.5 h4.5" fill="none" stroke="#6D6D6D" stroke-width="1"/>
<path d="M25.8,147 h6.4 l-3.2,3 Z" fill="#555555"/>
<path d="M61.5,79.7 l8.2,10.6 M70.4,79.7 l-8.2,10.6" stroke="#555555" stroke-width="1.9"/>
<circle cx="61.7" cy="93.6" r="3" fill="none" stroke="#3B76B8" stroke-width="1.1"/><circle cx="70.5" cy="93.6" r="3" fill="none" stroke="#3B76B8" stroke-width="1.1"/>
<path d="M58.5,107.7 h6 l2.6,2.6 v9.3 h-8.6 Z" fill="#fff" stroke="#6D6D6D" stroke-width="0.9"/>
<path d="M60,112 h4 M60,114.5 h5 M60,117 h5" stroke="#3B76B8" stroke-width="0.9"/>
<path d="M65.3,112.6 h6.5 l2.6,2.6 v9.3 h-9.1 Z" fill="#fff" stroke="#6D6D6D" stroke-width="0.9"/>
<path d="M67,117 h4 M67,119.5 h5.5 M67,122 h5.5" stroke="#3B76B8" stroke-width="0.9"/>
<path d="M124,114 h6 l-3,3 Z" fill="#555555"/>
<path d="M58.4,145.5 l6,-4.5 l6,6.5 l-5,4 Z" fill="#EBBF74"/>
<path d="M65,142 l5.5,-4 l4.5,4.5 l-4.3,4.6 Z" fill="#6D6D6D"/><path d="M71,137.5 l2.5,-1.2 l1.8,1.8 l-1.5,2.3 Z" fill="#6D6D6D"/>
<path d="M175.5,176.5 v-6 h6" fill="none" stroke="#9A9A9A" stroke-width="0.9"/><path d="M177.5,172.5 l4,4 M178.5,176.5 h3 v-3" fill="none" stroke="#9A9A9A" stroke-width="0.9"/>
<rect x="200.9" y="83.7" width="33.2" height="26.3" rx="2.5" fill="#fff" stroke="#6D6D6D" stroke-width="1"/>
<rect x="205" y="88.3" width="25" height="6.4" fill="#CFCFCF"/>
<path d="M205,100.6 h2 M209.2,100.6 h20.8 M205,103.4 h2 M209.2,103.4 h20.8" stroke="#A0A0A0" stroke-width="0.9"/>
<circle cx="203.75" cy="83.7" r="4" fill="#EBBF74"/><path d="M203.75,83.7 l7.00,0.00" stroke="#EBBF74" stroke-width="1.6"/><path d="M203.75,83.7 l4.95,4.95" stroke="#EBBF74" stroke-width="1.6"/><path d="M203.75,83.7 l-0.00,7.00" stroke="#EBBF74" stroke-width="1.6"/><path d="M203.75,83.7 l-4.95,4.95" stroke="#EBBF74" stroke-width="1.6"/><path d="M203.75,83.7 l-7.00,-0.00" stroke="#EBBF74" stroke-width="1.6"/><path d="M203.75,83.7 l-4.95,-4.95" stroke="#EBBF74" stroke-width="1.6"/><path d="M203.75,83.7 l0.00,-7.00" stroke="#EBBF74" stroke-width="1.6"/><path d="M203.75,83.7 l4.95,-4.95" stroke="#EBBF74" stroke-width="1.6"/><circle cx="203.75" cy="83.7" r="2.3" fill="#F1F1F1"/>
<path d="M232,147 h6 l-3,3 Z" fill="#555555"/>
<rect x="245.7" y="80.7" width="18.5" height="14.5" rx="0.8" fill="#fff" stroke="#6D6D6D" stroke-width="1"/>
<rect x="248.2" y="82.3" width="13.6" height="3.4" fill="#CFCFCF"/><rect x="248.2" y="87.3" width="5.5" height="5.5" fill="#CFCFCF"/>
<path d="M256.2,87.4 h5.6 M256.2,89.5 h5.6 M256.2,91.6 h4" stroke="#9A9A9A" stroke-width="0.8"/>
<path d="M315.8,86 h6.2 l-3.1,3 Z" fill="#555555"/>
<rect x="247.4" y="109.5" width="17" height="13.8" rx="0.8" fill="#fff" stroke="#6D6D6D" stroke-width="1"/>
<rect x="249.2" y="113.5" width="5" height="7" fill="#CFCFCF"/><rect x="255" y="111.5" width="7.5" height="2.5" fill="#CFCFCF"/>
<path d="M256.2,116 h6 M256.2,118 h6 M256.2,120 h4" stroke="#9A9A9A" stroke-width="0.8"/>
<path d="M247.5,110.8 c2,-4 9,-5 10.5,-0.5" fill="none" stroke="#3B76B8" stroke-width="1.8"/><path d="M245.2,114.8 l0.5,-6 l5,2.8 Z" fill="#3B76B8"/>
<path d="M254,137.7 h9.2 v3.6 h-9.2" fill="none" stroke="#E0701E" stroke-width="1.1"/>
<path d="M249.3,138.2 l4.20,0.00" stroke="#EBBF74" stroke-width="1"/><path d="M249.3,138.2 l2.97,2.97" stroke="#EBBF74" stroke-width="1"/><path d="M249.3,138.2 l-0.00,4.20" stroke="#EBBF74" stroke-width="1"/><path d="M249.3,138.2 l-2.97,2.97" stroke="#EBBF74" stroke-width="1"/><path d="M249.3,138.2 l-4.20,-0.00" stroke="#EBBF74" stroke-width="1"/><path d="M249.3,138.2 l-2.97,-2.97" stroke="#EBBF74" stroke-width="1"/><path d="M249.3,138.2 l0.00,-4.20" stroke="#EBBF74" stroke-width="1"/><path d="M249.3,138.2 l2.97,-2.97" stroke="#EBBF74" stroke-width="1"/><circle cx="249.3" cy="138.2" r="1.6" fill="#F1F1F1"/>
<rect x="252.4" y="143.6" width="11" height="9" fill="#fff" stroke="#6D6D6D" stroke-width="1"/><rect x="254" y="145.2" width="8" height="2.5" fill="#CFCFCF"/>
<path d="M320.8,142 h6.2 l-3.1,3 Z" fill="#555555"/><rect x="343.5" y="85.5" width="111" height="26" fill="#fff" stroke="#C6C6C6" stroke-width="1"/>
<rect x="440.5" y="86" width="13.5" height="25" fill="#E6E6E6"/>
<path d="M444.5,96.5 h6.0 l-3.0,3.0 Z" fill="#BDBDBD"/>
<rect x="455.5" y="85.5" width="54" height="26" fill="#fff" stroke="#C6C6C6" stroke-width="1"/>
<rect x="495.5" y="86" width="13.5" height="25" fill="#E6E6E6"/>
<path d="M499.5,96.5 h6.0 l-3.0,3.0 Z" fill="#BDBDBD"/>
<text x="518" y="104" font-family="Liberation Sans" font-size="14" fill="#ABABAB">A</text>
<path d="M526,91.9 l3,-2.5 l3,2.5 Z" fill="#ABABAB"/>
<text x="543" y="104" font-family="Liberation Sans" font-size="14" fill="#ABABAB">A</text>
<path d="M551,90.4 h6 l-3,2.4 Z" fill="#ABABAB"/>
<rect x="566" y="87" width="1" height="22" fill="#D0D0D0"/>
<text x="578" y="100" font-family="Liberation Sans" font-size="13" fill="#ABABAB">A</text>
<path d="M585,101 l6,-6 l3,3 l-6,6 Z" fill="#ABABAB"/><path d="M583,103 l2,-2 l3,3 l-2,2 Z" fill="#B5B5B5"/>
<text x="350" y="141" font-family="Liberation Sans" font-weight="bold" font-size="16" fill="#ABABAB">B</text>
<text x="377" y="141" font-family="Liberation Serif" font-style="italic" font-weight="bold" font-size="16.5" fill="#ABABAB">I</text>
<text x="401.5" y="141" font-family="Liberation Sans" font-weight="bold" font-size="15" fill="#ABABAB">U</text><rect x="402" y="142.2" width="11" height="1" fill="#ABABAB"/>
<text x="430" y="142" font-family="Liberation Sans" font-weight="bold" font-size="16" fill="#D8D8D8">S</text><text x="429" y="141" font-family="Liberation Sans" font-weight="bold" font-size="16" fill="#ABABAB">S</text>
<text x="450" y="141.2" font-family="Liberation Sans" font-size="12" fill="#ABABAB" textLength="20" lengthAdjust="spacingAndGlyphs">abc</text><rect x="450" y="136.6" width="20" height="1.1" fill="#ABABAB"/>
<text x="477.5" y="137" font-family="Liberation Sans" font-size="13" fill="#ABABAB" textLength="17.5" lengthAdjust="spacingAndGlyphs">AV</text>
<path d="M478,141.5 h17 M480.5,139.5 l-2.5,2 l2.5,2 M492.5,139.5 l2.5,2 l-2.5,2" fill="none" stroke="#ABABAB" stroke-width="0.9"/>
<path d="M500,132.8 h6 l-3.0,3.0 Z" fill="#ABABAB"/>
<text x="515.5" y="140" font-family="Liberation Sans" font-size="15" fill="#ABABAB" textLength="17" lengthAdjust="spacingAndGlyphs">Aa</text>
<path d="M538,132.8 h6 l-3.0,3.0 Z" fill="#ABABAB"/>
<rect x="553" y="124.5" width="1" height="21" fill="#D0D0D0"/>
<text x="564.5" y="138.5" font-family="Liberation Sans" font-weight="bold" font-size="17" fill="#ABABAB">A</text>
<path d="M587,132.8 h6 l-3.0,3.0 Z" fill="#ABABAB"/>
<path d="M588.5,176.5 v-6 h6" fill="none" stroke="#A0A0A0" stroke-width="0.9"/><path d="M590.5,172.5 l4,4 M591.5,176.5 h3 v-3" fill="none" stroke="#A0A0A0" stroke-width="0.9"/>
<circle cx="611.3" cy="90.4" r="1.4" fill="#ABABAB"/><rect x="616" y="89.9" width="12" height="1" fill="#ABABAB"/>
<circle cx="611.3" cy="97.3" r="1.4" fill="#ABABAB"/><rect x="616" y="96.8" width="12" height="1" fill="#ABABAB"/>
<circle cx="611.3" cy="104.4" r="1.4" fill="#ABABAB"/><rect x="616" y="103.9" width="12" height="1" fill="#ABABAB"/>
<path d="M635.2,95.5 h6.0 l-3.0,3.0 Z" fill="#ABABAB"/>
<text x="648.5" y="92.4" font-family="Liberation Sans" font-size="5" fill="#ABABAB">1</text><rect x="655.4" y="89.9" width="11.5" height="1" fill="#ABABAB"/>
<text x="648.5" y="99.3" font-family="Liberation Sans" font-size="5" fill="#ABABAB">2</text><rect x="655.4" y="96.8" width="11.5" height="1" fill="#ABABAB"/>
<text x="648.5" y="106.4" font-family="Liberation Sans" font-size="5" fill="#ABABAB">3</text><rect x="655.4" y="103.9" width="11.5" height="1" fill="#ABABAB"/>
<path d="M674.2,95.5 h6.0 l-3.0,3.0 Z" fill="#ABABAB"/>
<rect x="688" y="87.5" width="1" height="21" fill="#D0D0D0"/>
<rect x="697" y="89.9" width="18" height="1" fill="#ABABAB"/>
<rect x="723" y="89.9" width="18" height="1" fill="#ABABAB"/>
<rect x="705" y="93.2" width="10" height="1" fill="#ABABAB"/>
<rect x="731" y="93.2" width="10" height="1" fill="#ABABAB"/>
<rect x="705" y="96.5" width="10" height="1" fill="#ABABAB"/>
<rect x="731" y="96.5" width="10" height="1" fill="#ABABAB"/>
<rect x="705" y="100.0" width="10" height="1" fill="#ABABAB"/>
<rect x="731" y="100.0" width="10" height="1" fill="#ABABAB"/>
<rect x="697" y="103.5" width="18" height="1" fill="#ABABAB"/>
<rect x="723" y="103.5" width="18" height="1" fill="#ABABAB"/>
<path d="M703,97 h-5 M700.5,94.5 l-2.5,2.5 l2.5,2.5" fill="none" stroke="#ABABAB" stroke-width="1.5"/>
<path d="M723,97 h5 M725.5,94.5 l2.5,2.5 l-2.5,2.5" fill="none" stroke="#ABABAB" stroke-width="1.5"/>
<rect x="749" y="87.5" width="1" height="21" fill="#D0D0D0"/>
<path d="M759.5,90 v16 M757,92.5 l2.5,-3 l2.5,3 M757,103.5 l2.5,3 l2.5,-3" fill="none" stroke="#ABABAB" stroke-width="1.3"/>
<rect x="763" y="91.5" width="12" height="1" fill="#ABABAB"/>
<rect x="763" y="95" width="12" height="1" fill="#ABABAB"/>
<rect x="763" y="98.5" width="12" height="1" fill="#ABABAB"/>
<rect x="763" y="102" width="12" height="1" fill="#ABABAB"/>
<path d="M781,96 h6 l-3.0,3.0 Z" fill="#ABABAB"/>
<rect x="612" y="129" width="14" height="1" fill="#ABABAB"/>
<rect x="612" y="132.5" width="10" height="1" fill="#ABABAB"/>
<rect x="612" y="136" width="14" height="1" fill="#ABABAB"/>
<rect x="612" y="139.5" width="10" height="1" fill="#ABABAB"/>
<rect x="637.0" y="129" width="16" height="1" fill="#ABABAB"/>
<rect x="640.0" y="132.5" width="10" height="1" fill="#ABABAB"/>
<rect x="637.0" y="136" width="16" height="1" fill="#ABABAB"/>
<rect x="640.0" y="139.5" width="10" height="1" fill="#ABABAB"/>
<rect x="664" y="129" width="14" height="1" fill="#ABABAB"/>
<rect x="668" y="132.5" width="10" height="1" fill="#ABABAB"/>
<rect x="664" y="136" width="14" height="1" fill="#ABABAB"/>
<rect x="668" y="139.5" width="10" height="1" fill="#ABABAB"/>
<rect x="689" y="129" width="16" height="1" fill="#ABABAB"/>
<rect x="689" y="132.5" width="16" height="1" fill="#ABABAB"/>
<rect x="689" y="136" width="16" height="1" fill="#ABABAB"/>
<rect x="689" y="139.5" width="16" height="1" fill="#ABABAB"/>
<rect x="714" y="124.5" width="1" height="21" fill="#D0D0D0"/>
<rect x="723" y="128.5" width="7.5" height="1" fill="#ABABAB"/><rect x="732.5" y="128.5" width="7.5" height="1" fill="#ABABAB"/>
<rect x="723" y="132" width="7.5" height="1" fill="#ABABAB"/><rect x="732.5" y="132" width="7.5" height="1" fill="#ABABAB"/>
<rect x="723" y="135.5" width="7.5" height="1" fill="#ABABAB"/><rect x="732.5" y="135.5" width="7.5" height="1" fill="#ABABAB"/>
<rect x="723" y="139" width="7.5" height="1" fill="#ABABAB"/><rect x="732.5" y="139" width="7.5" height="1" fill="#ABABAB"/>
<path d="M746,133.5 h6 l-3.0,3.0 Z" fill="#ABABAB"/>
<path d="M797,79 v18 M801,79 v18 M805,86 v11 M809,86 v11 M813,86 v11" stroke="#ABABAB" stroke-width="1"/>
<path d="M795.5,95 l1.5,2.5 l1.5,-2.5 M799.5,95 l1.5,2.5 l1.5,-2.5 M803.5,95 l1.5,2.5 l1.5,-2.5 M807.5,95 l1.5,2.5 l1.5,-2.5 M811.5,95 l1.5,2.5 l1.5,-2.5" fill="none" stroke="#ABABAB" stroke-width="0.9"/>
<text x="804" y="85.5" font-family="Liberation Sans" font-size="9" fill="#ABABAB">A</text>
<path d="M913.7,86.5 h6.2999999999999545 l-3.1499999999999773,3.1499999999999773 Z" fill="#ABABAB"/>
<path d="M798,108 h-2.5 v15 h2.5 M812,108 h2.5 v15 h-2.5" fill="none" stroke="#ABABAB" stroke-width="1"/>
<path d="M805.2,110 v11 M802.8,112.5 l2.4,-2.5 l2.4,2.5 M802.8,118.5 l2.4,2.5 l2.4,-2.5 M799,115.5 h12" fill="none" stroke="#ABABAB" stroke-width="1"/>
<path d="M888,115.5 h6 l-3.0,3.0 Z" fill="#ABABAB"/>
<path d="M795,137.5 h9 l3,4 h-9 Z" fill="#ABABAB"/><path d="M795,146 l2.5,-3 h6" fill="none" stroke="#ABABAB" stroke-width="1"/>
<rect x="801.5" y="142.5" width="13" height="8.5" fill="#F1F1F1" stroke="#ABABAB" stroke-width="1"/>
<path d="M804,145.5 h1 M806.5,145.5 h6 M804,148 h1 M806.5,148 h6" stroke="#ABABAB" stroke-width="0.8"/>
<path d="M954.2,143 h6.0 l-3.0,3.0 Z" fill="#ABABAB"/>
<path d="M958.5,176.5 v-6 h6" fill="none" stroke="#A0A0A0" stroke-width="0.9"/><path d="M960.5,172.5 l4,4 M961.5,176.5 h3 v-3" fill="none" stroke="#A0A0A0" stroke-width="0.9"/><rect x="977.5" y="77.5" width="163" height="76" fill="#fff" stroke="#C3C3C3" stroke-width="1"/>
<rect x="1123.5" y="78" width="16.5" height="25.5" fill="#E6E6E6"/>
<path d="M1123.5,78 v75 M1124,103.7 h16 M1124,126.7 h16" stroke="#C8C8C8" stroke-width="1"/>
<path d="M1128.5,92 h6 l-3,-2.5 Z" fill="#C8C8C8"/>
<path d="M1128.5,114 h6 l-3,2.8 Z" fill="#555555"/>
<rect x="1128.5" y="136.5" width="6" height="1" fill="#555555"/><path d="M1128.5,139 h6 l-3,2.8 Z" fill="#555555"/>
<rect x="980.6" y="83.6" width="18" height="14.8" fill="none" stroke="#555555" stroke-width="1"/>
<text x="982.5" y="90.8" font-family="Liberation Sans" font-weight="bold" font-size="8" fill="#3B76B8">A</text>
<path d="M990,86.5 h6.5 M990,89.5 h6.5 M982.5,92.5 h14 M982.5,95.5 h14" stroke="#888" stroke-width="0.8"/>
<path d="M1005.1,82.1 L1022.8,99.7" fill="none" stroke="#555555" stroke-width="1"/>
<path d="M1029.2,82.1 L1046.9,99.7 M1046.9,99.7 h-4 M1046.9,99.7 v-4" fill="none" stroke="#555555" stroke-width="1"/>
<rect x="1053.6" y="84.6" width="17" height="13" fill="none" stroke="#555555" stroke-width="1"/>
<ellipse cx="1085.9" cy="90.4" rx="8.8" ry="7.2" fill="none" stroke="#555555" stroke-width="1"/>
<rect x="1101.4" y="84.6" width="17.2" height="13" rx="3" fill="none" stroke="#555555" stroke-width="1"/>
<path d="M989.6,107.5 L981.5,123.5 H997.8 Z" fill="none" stroke="#555555" stroke-width="1"/>
<path d="M1005.1,108.5 H1013.5 V121.5 H1022.8" fill="none" stroke="#555555" stroke-width="1"/>
<path d="M1029.2,107.5 H1038.3 V120.2 H1046.9 M1044,117.5 l2.9,2.7 l-2.9,2.7" fill="none" stroke="#555555" stroke-width="1"/>
<path d="M1053.6,111.2 H1061.8 V106.3 L1069.7,114.4 L1061.8,122.5 V117.4 H1053.6 Z" fill="none" stroke="#555555" stroke-width="1"/>
<path d="M1082.3,106.3 H1088.8 V114.3 H1093.6 L1085.5,122.5 L1077.3,114.3 H1082.3 Z" fill="none" stroke="#555555" stroke-width="1"/>
<path d="M1101.2,112 L1105.5,107.4 H1114.8 C1111.5,108.5 1111.5,114 1115,114 H1118.6 V122.5 H1101.2 Z" fill="none" stroke="#555555" stroke-width="1"/>
<path d="M987.5,129.5 c0,3 -4,5 -2.5,7 c2,2 4,-2 6,0 c1.5,2 -2,5 -1,7 c1,2 4,1 3.5,-1 c-0.5,-2 -3,-1 -3,2 c0,1.5 1,2.5 2,3.5" fill="none" stroke="#555555" stroke-width="1"/>
<path d="M1005,131.3 C1015,131.5 1022.5,138 1022.8,146.8" fill="none" stroke="#555555" stroke-width="1"/>
<path d="M1028.5,140.5 C1031,134 1036,130 1038.5,132.5 C1041,135 1042,146.5 1047.5,146.5" fill="none" stroke="#555555" stroke-width="1"/>
<text x="1054" y="145" font-family="Liberation Sans" font-size="18" fill="#555555">{</text>
<text x="1078.5" y="145" font-family="Liberation Sans" font-size="18" fill="#555555">}</text>
<polygon points="1109.50,130.50 1111.67,136.01 1117.58,136.37 1113.02,140.14 1114.50,145.88 1109.50,142.70 1104.50,145.88 1105.98,140.14 1101.42,136.37 1107.33,136.01" fill="none" stroke="#555555" stroke-width="1"/>
<rect x="1155.9" y="79.9" width="14.6" height="14.6" fill="#fff" stroke="#6D6D6D" stroke-width="1"/>
<rect x="1162" y="86.3" width="20" height="20.5" fill="#EBBF74"/>
<rect x="1155.9" y="79.9" width="14.6" height="14.6" fill="#fff" stroke="#6D6D6D" stroke-width="1"/>
<rect x="1174" y="98.5" width="15.3" height="15.3" fill="#fff" stroke="#6D6D6D" stroke-width="1"/>
<path d="M1170,147.5 h6 l-3.0,3.0 Z" fill="#555555"/>
<rect x="1211.5" y="80.8" width="32" height="32" rx="5" fill="#F5F2F5" stroke="#CFCFCF" stroke-width="1"/>
<path d="M1247.5,91 l-14,15 l4,3 l11,-13.5 Z" fill="#BDBDBD"/><path d="M1233,106 c-3,1 -5,4 -11,9.5 c6,-1 9.5,-3 12.5,-6 Z" fill="#BDBDBD"/>
<path d="M1249,148 h6 l-3.0,3.0 Z" fill="#ABABAB"/>
<path d="M1261.5,86.3 l7,-7 l7,7 l-7,7 Z" fill="#F5F2F5" stroke="#ABABAB" stroke-width="1.1" stroke-linejoin="round"/>
<path d="M1266,81.5 v-3 a1.5,1.5 0 0 1 3,0 v4" fill="none" stroke="#ABABAB" stroke-width="1"/>
<path d="M1275.5,85 c1.5,1.5 1.5,4 0.5,6" fill="none" stroke="#ABABAB" stroke-width="1.8"/>
<path d="M1349.5,85.2 h6 l-3,3 Z" fill="#ABABAB"/>
<path d="M1265.5,105.5 h-7 v13.5 h5" fill="none" stroke="#ABABAB" stroke-width="1"/>
<path d="M1264.5,117.5 l11,-11.5 l1.8,1.8 l-11,11.5 l-2.8,1 Z" fill="#ABABAB"/>
<path d="M1378.5,112.3 h6 l-3,3 Z" fill="#ABABAB"/>
<path d="M1259.5,141.5 l3.5,-8 a2,2 0 0 1 2,-1.3 h8.5 a2,2 0 0 1 2,2.2 v7.5 l-3,5 h-10 a3,3 0 0 1 -3,-3.2 Z" fill="#BDBDBD"/>
<path d="M1262,140.5 l3,-7 h9.5 l-2.5,7 Z" fill="#F5F2F5"/>
<path d="M1374.5,139.5 h6 l-3,3 Z" fill="#ABABAB"/>
<path d="M1383.5,176.5 v-6 h6" fill="none" stroke="#A0A0A0" stroke-width="0.9"/><path d="M1385.5,172.5 l4,4 M1386.5,176.5 h3 v-3" fill="none" stroke="#A0A0A0" stroke-width="0.9"/>
<circle cx="1412.9" cy="84.9" r="5.6" fill="none" stroke="#3B76B8" stroke-width="1.9"/><path d="M1408.6,89.6 L1402.8,95.6" stroke="#3B76B8" stroke-width="2.2" stroke-linecap="round"/>
<text x="1401.5" y="113.8" font-family="Liberation Sans" font-size="9" fill="#444">a</text><text x="1407" y="113.8" font-family="Liberation Sans" font-size="10" fill="#8A4FB3">b</text>
<path d="M1402,116 c0.5,2.5 2,3.5 5,3.5 M1405,117.5 l2.2,2 l-2.2,2" fill="none" stroke="#3B76B8" stroke-width="1"/>
<text x="1409.5" y="122.8" font-family="Liberation Sans" font-size="9" fill="#444">a</text><text x="1414.8" y="122.8" font-family="Liberation Sans" font-size="9" fill="#3B76B8">c</text>
<path d="M1487,112.2 h6 l-3.0,3.0 Z" fill="#555555"/>
<path d="M1406.5,132.5 V147 L1410.2,143.6 L1413.3,149.4 L1415.6,148.3 L1412.5,142.4 L1416.8,142.4 Z" fill="#fff" stroke="#555555" stroke-width="0.9"/>
<path d="M1468,139.2 h6 l-3.0,3.0 Z" fill="#555555"/>
<path d="M1542,82.5 h11 l6.5,6.5 v15 M1552.5,110.3 h-10.5 a2.2,2.2 0 0 1 -2.2,-2.2 v-23.4 a2.2,2.2 0 0 1 2.2,-2.2" fill="none" stroke="#3D7BE3" stroke-width="1.5"/>
<path d="M1550,88 c-1,5 -3,11 -6,13 c-2,1.5 -1,2 1,1 c3,-2 9,-4 12,-3 c2,0.5 1,-1.5 -1,-1.5 c-3,0 -5,-4 -6,-9.5 Z" fill="none" stroke="#3D7BE3" stroke-width="0.9"/>
<path d="M1562.5,101 l-2.5,2.5 a2.5,2.5 0 0 0 3.5,3.5 l2.5,-2.5 a2.5,2.5 0 0 0 -3.5,-3.5 Z M1557,108.5 l-2.5,2.5 a2.5,2.5 0 0 0 3.5,3.5 l2.5,-2.5 a2.5,2.5 0 0 0 -3.5,-3.5 Z M1559,110 l3,-3" fill="none" stroke="#3D7BE3" stroke-width="1.6" transform="translate(0,0)"/>
<path d="M1632,112.3 h-15.5 a1.5,1.5 0 0 1 -1.5,-1.5 v-29 a1.5,1.5 0 0 1 1.5,-1.5 h21.5 l3.5,3.5 v18" fill="none" stroke="#4B5770" stroke-width="1.6"/>
<path d="M1638,80.3 v3.5 h3.5 Z" fill="#4B5770"/>
<rect x="1611" y="85" width="22.8" height="11.5" fill="#E54B4B"/>
<text x="1612.5" y="95.2" font-family="Liberation Sans" font-weight="bold" font-size="10.5" fill="#fff" textLength="20" lengthAdjust="spacingAndGlyphs">PDF</text>
<circle cx="1638.4" cy="106.3" r="7.2" fill="#F1F1F1" stroke="#4B5770" stroke-width="1.5"/><path d="M1638.4,102.5 v7.6 M1634.6,106.3 h7.6" stroke="#4B5770" stroke-width="1.3"/>
<path d="M1662,113.2 L1663.8,93.8 L1674,89.6 L1686,100.5 L1681.5,112.2 Z" fill="none" stroke="#4B5770" stroke-width="1.5" stroke-linejoin="round"/>
<path d="M1673.5,87.5 L1678.8,81.6 L1696,98 L1690.5,103.6 Z" fill="none" stroke="#4B5770" stroke-width="1.5" stroke-linejoin="round"/>
<path d="M1662.5,112.5 L1670.5,105" stroke="#E54B4B" stroke-width="1.3"/><circle cx="1672.2" cy="103.3" r="2.6" fill="none" stroke="#E54B4B" stroke-width="1.2"/>
<path d="M1898.5,176 L1904,170.5 L1909.5,176" fill="none" stroke="#555" stroke-width="1.4"/><path d="M284.5,197 h8.0 l-4.0,-4.5 Z" fill="#6A6A6A"/>
<path d="M284.5,988.5 h8.0 l-4.0,4.5 Z" fill="#6A6A6A"/>
<path d="M1905.5,196.5 h9.0 l-4.5,-4.5 Z" fill="#6A6A6A"/>
<path d="M1905.5,877.5 h9.0 l-4.5,4.5 Z" fill="#6A6A6A"/>
<path d="M1905,899.8 h9 l-4.5,-5 Z M1905,905 h9 l-4.5,-5 Z" fill="#6A6A6A"/>
<path d="M1905,916.7 h9 l-4.5,5 Z M1905,922 h9 l-4.5,5 Z" fill="#6A6A6A"/>
<path d="M100.5,1009.5 h6.5 l1.8,1.5 v11 l-1.8,-1.5 h-6.5 Z M108.8,1011 l1.8,-1.5 h6.5 v11.5 h-6.5 l-1.8,1.5" fill="none" stroke="#666" stroke-width="1"/>
<path d="M111.5,1018.5 l5,-5 l1.5,1.5 l-5,5 h-1.5 Z" fill="#F1F1F1" stroke="#666" stroke-width="0.9"/>
<path d="M1345.5,1012 l3,-3 l3,3 Z" fill="#5A5A5A"/><path d="M1342,1014.5 h13 M1342,1017.5 h13 M1342,1020.8 h13" stroke="#5A5A5A" stroke-width="1"/>
<path d="M1417.5,1008.5 h14.5 v10.5 h-7 l-3,3.5 v-3.5 h-4.5 Z" fill="#707070"/>
<rect x="1532.5" y="1009.5" width="13.5" height="12.5" fill="none" stroke="#5A5A5A" stroke-width="1"/><path d="M1535,1009.5 v12.5 M1535,1018.5 h11" stroke="#5A5A5A" stroke-width="1"/><rect x="1538" y="1012" width="5" height="3" fill="none" stroke="#5A5A5A" stroke-width="0.9"/>
<rect x="1573.5" y="1009.5" width="5.5" height="4.5" fill="none" stroke="#5A5A5A" stroke-width="1"/>
<rect x="1581" y="1009.5" width="5.5" height="4.5" fill="none" stroke="#5A5A5A" stroke-width="1"/>
<rect x="1573.5" y="1017" width="5.5" height="4.5" fill="none" stroke="#5A5A5A" stroke-width="1"/>
<rect x="1581" y="1017" width="5.5" height="4.5" fill="none" stroke="#5A5A5A" stroke-width="1"/>
<path d="M1614,1010 h6 l0.8,0.8 l0.8,-0.8 h5.9 v11 h-5.9 l-0.8,1 l-0.8,-1 h-6 Z M1620.8,1010.8 v11" fill="none" stroke="#5A5A5A" stroke-width="1"/>
<path d="M1616,1013 h3 M1616,1015.5 h3 M1616,1018 h3 M1623,1013 h3 M1623,1015.5 h3 M1623,1018 h3" stroke="#5A5A5A" stroke-width="0.8"/>
<rect x="1655.3" y="1010" width="12.7" height="1.4" fill="#5A5A5A"/><path d="M1656.5,1011.4 v5.6 h10.3 v-5.6" fill="none" stroke="#5A5A5A" stroke-width="1"/><path d="M1658.5,1013.5 h6" stroke="#5A5A5A" stroke-width="0.9"/><path d="M1661.6,1017 v4 M1659,1021.4 h5.2" stroke="#5A5A5A" stroke-width="1"/>
<rect x="1688" y="1015.5" width="9.3" height="1.8" fill="#5A5A5A"/>
<rect x="1701.3" y="1016" width="124.7" height="1" fill="#A6A6A6"/>
<rect x="1763.3" y="1013" width="1" height="6.5" fill="#A6A6A6"/>
<rect x="1748" y="1009" width="5" height="14" fill="#5A5A5A"/>
<path d="M1836,1010.5 v11 M1830.5,1016 h11" stroke="#5A5A5A" stroke-width="1.8"/>
<rect x="1898.5" y="1010.5" width="14" height="14" fill="none" stroke="#5A5A5A" stroke-width="1"/>
<path d="M1905.5,1012 v3 M1905.5,1020 v3 M1900,1017.5 h3 M1908,1017.5 h3" stroke="#5A5A5A" stroke-width="0.8"/>
<path d="M20,1046.5 L27.8,1045.4 V1054.3 H20 Z M29,1045.2 L40.3,1043.6 V1054.3 H29 Z M20,1055.4 H27.8 V1064.3 L20,1063.2 Z M29,1055.4 H40.3 V1066 L29,1064.5 Z" fill="#fff"/>
<circle cx="88.5" cy="1051" r="6.2" fill="none" stroke="#1A1A1A" stroke-width="1.3"/><path d="M84,1055.5 L75.5,1064" stroke="#1A1A1A" stroke-width="1.4"/>
<path d="M360.2,1040 Q364.12,1050.08 374.2,1054 Q364.12,1057.92 360.2,1068 Q356.28,1057.92 346.2,1054 Q356.28,1050.08 360.2,1040 Z" fill="#F7C327"/>
<path d="M388.5,1052 Q390.46,1057.04 395.5,1059 Q390.46,1060.96 388.5,1066 Q386.54,1060.96 381.5,1059 Q386.54,1057.04 388.5,1052 Z" fill="#F7C327"/>
<path d="M336,1059.3 Q337.54,1063.26 341.5,1064.8 Q337.54,1066.34 336,1070.3 Q334.46,1066.34 330.5,1064.8 Q334.46,1063.26 336,1059.3 Z" fill="#1FA0F0"/>
<circle cx="380.4" cy="1042.5" r="2.4" fill="#EE6B2F"/><circle cx="404" cy="1066.7" r="2.4" fill="#7CC243"/>
<path d="M440.5,1045 v2.5 h12.5 v-2.5 M440.5,1064.2 v-2.5 h12.5 v2.5" fill="none" stroke="#fff" stroke-width="1.1"/><rect x="440.8" y="1050.6" width="12.2" height="8.3" fill="none" stroke="#fff" stroke-width="1.1"/><path d="M458.5,1045 v19.5" stroke="#fff" stroke-width="1.1"/><rect x="457" y="1051.5" width="3" height="3" fill="#fff"/>
<path d="M500.5,1045 a1.5,1.5 0 0 1 1.5,-1.5 h6 l2,1.8 h15.5 a1.5,1.5 0 0 1 1.5,1.5 v18 a1.5,1.5 0 0 1 -1.5,1.5 h-23.5 a1.5,1.5 0 0 1 -1.5,-1.5 Z" fill="#FFD35C"/>
<path d="M500.5,1045 a1.5,1.5 0 0 1 1.5,-1.5 h6 l2,1.8 h15.5 a1.5,1.5 0 0 1 1.5,1.5 v1.5 h-26.5 Z" fill="#E3A81A"/>
<path d="M505,1066 v-7.5 a2,2 0 0 1 2,-2 h14 a2,2 0 0 1 2,2 v7.5 h-4.5 v-5 h-9 v5 Z" fill="#3B8FDF"/>
<path d="M561,1045 h29 v21 a4,4 0 0 1 -4,4 h-21 a4,4 0 0 1 -4,-4 Z" fill="#F4F4F4"/>
<path d="M569,1047 v-4.5 a1,1 0 0 1 1,-1 h11.5 a1,1 0 0 1 1,1 v4.5" fill="none" stroke="#2BB3EA" stroke-width="1.8"/>
<rect x="570" y="1052" width="5" height="5" fill="#F25022"/><rect x="576" y="1052" width="5" height="5" fill="#7FBA00"/><rect x="570" y="1058" width="5" height="5" fill="#00A4EF"/><rect x="576" y="1058" width="5" height="5" fill="#FFB900"/>
<defs><linearGradient id="eg" x1="0" y1="0" x2="1" y2="1"><stop offset="0" stop-color="#35C1F1"/><stop offset="0.5" stop-color="#2D9DE0"/><stop offset="1" stop-color="#1B5FB8"/></linearGradient><linearGradient id="eg2" x1="0" y1="0" x2="1" y2="0"><stop offset="0" stop-color="#2EAFD8"/><stop offset="1" stop-color="#6BD36A"/></linearGradient></defs>
<circle cx="638" cy="1055" r="15" fill="url(#eg)"/>
<path d="M626,1050 c3,-8 14,-11 21,-6 c5,3.5 6,9 4,12.5 c-2,3 -6,3 -9,2 c2,-2 3,-5 0,-7.5 c-4,-3 -12,-3 -16,-1 Z" fill="url(#eg2)"/>
<path d="M640,1058.5 c-4,-1 -6,-4 -5,-7 c-5,2 -6,9 -2,13 c4,4 11,5 17,1.5 c-4,1 -8,-1.5 -10,-7.5 Z" fill="#1A4F9E"/>
<rect x="686" y="1040.8" width="27.4" height="26.2" rx="4" fill="#B30B00"/>
<path d="M699.5,1045.5 c-1.5,0 -2,1.5 -1.5,4 c0.5,3 2,6 4,9 c2,2.5 5,4 7,3.5 c1.5,-0.5 1,-2 -1,-2.5 c-3,-0.8 -7,0 -11,2 c-3,1.5 -5,3 -5.5,4.5 c-0.3,1.2 1,1.5 2,0.5 c2,-2 4,-6 5.5,-10 c1,-3 1.5,-6 1.5,-8 c0,-2 -0.5,-3 -1,-3 Z" fill="none" stroke="#fff" stroke-width="1.3"/>
<path d="M748,1044.5 L764.5,1041.3 V1068 L748,1065 Z" fill="#2B579A"/><rect x="764" y="1044.3" width="10.8" height="20.7" fill="#2B579A"/><rect x="764" y="1045.5" width="9.3" height="18.2" fill="#fff"/>
<path d="M765.5,1048 h7 M765.5,1051 h7 M765.5,1054 h7 M765.5,1057 h7 M765.5,1060 h7" stroke="#2B579A" stroke-width="1.1"/>
<text x="750" y="1060" font-family="Liberation Sans" font-weight="bold" font-size="11" fill="#fff">W</text>
<path d="M810,1044.5 L826.5,1041.3 V1068 L810,1065 Z" fill="#D24726"/><rect x="826" y="1044.3" width="11.2" height="20.7" fill="#D24726"/><rect x="826" y="1045.5" width="9.8" height="18.2" fill="#fff"/>
<path d="M830,1047 a4,4 0 1 0 4,4 h-4 Z" fill="#D24726"/><path d="M829,1057 h6 M829,1060 h6" stroke="#D24726" stroke-width="1.1"/>
<text x="812.3" y="1060" font-family="Liberation Sans" font-weight="bold" font-size="12" fill="#fff">P</text>
<path d="M1612.5,1058.5 L1620,1051 L1627.5,1058.5" fill="none" stroke="#fff" stroke-width="1.2"/>
<path d="M1640,1047.5 L1660,1045 V1063.5 L1640,1062 Z" fill="none" stroke="#fff" stroke-width="1.2"/>
<path d="M1653.5,1050 a4,4 0 0 0 -7,2 M1646.5,1056 a4,4 0 0 0 7,-2 M1653.5,1048.5 v2 h-2 M1646.5,1057.5 v-2 h2" fill="none" stroke="#fff" stroke-width="0.9"/>
<circle cx="1655.8" cy="1060.5" r="4" fill="#2E7BD6"/>
<path d="M1670.5,1051.5 h3 l4,-4.5 v15.5 l-4,-4.5 h-3 Z" fill="none" stroke="#fff" stroke-width="1.1"/>
<path d="M1680.5,1052 a4,4 0 0 1 0,5.5 M1683.5,1049.5 a8,8 0 0 1 0,10.5 M1686.5,1047 a12,12 0 0 1 0,15.5" fill="none" stroke="#fff" stroke-width="1.1"/>
<path d="M1703,1049.5 h15 v11 h-15 Z" fill="none" stroke="#fff" stroke-width="1.2"/><rect x="1718.5" y="1053" width="1.8" height="4" fill="#fff"/><rect x="1704.5" y="1051" width="12" height="8" fill="#fff"/>
<path d="M1700.5,1048.7 v4 M1703,1048.7 v4 M1700,1052.5 h3.5" stroke="#fff" stroke-width="1"/>
<path d="M1869,1045.5 h19.5 v14.5 h-11 l-4,3.5 v-3.5 h-4.5 Z" fill="#fff"/><path d="M1872,1049.5 h13 M1872,1052.5 h13 M1872,1055.5 h13" stroke="#1E2C46" stroke-width="1"/>
<circle cx="1888.3" cy="1064.2" r="9.5" fill="#2B2B2B" stroke="#6B6B6B" stroke-width="1"/>
<text x="1884.5" y="1069.5" font-family="Liberation Sans" font-size="13" fill="#fff">1</text>
<rect x="1914" y="1030" width="1" height="50" fill="#56606E"/></svg></body></html>
